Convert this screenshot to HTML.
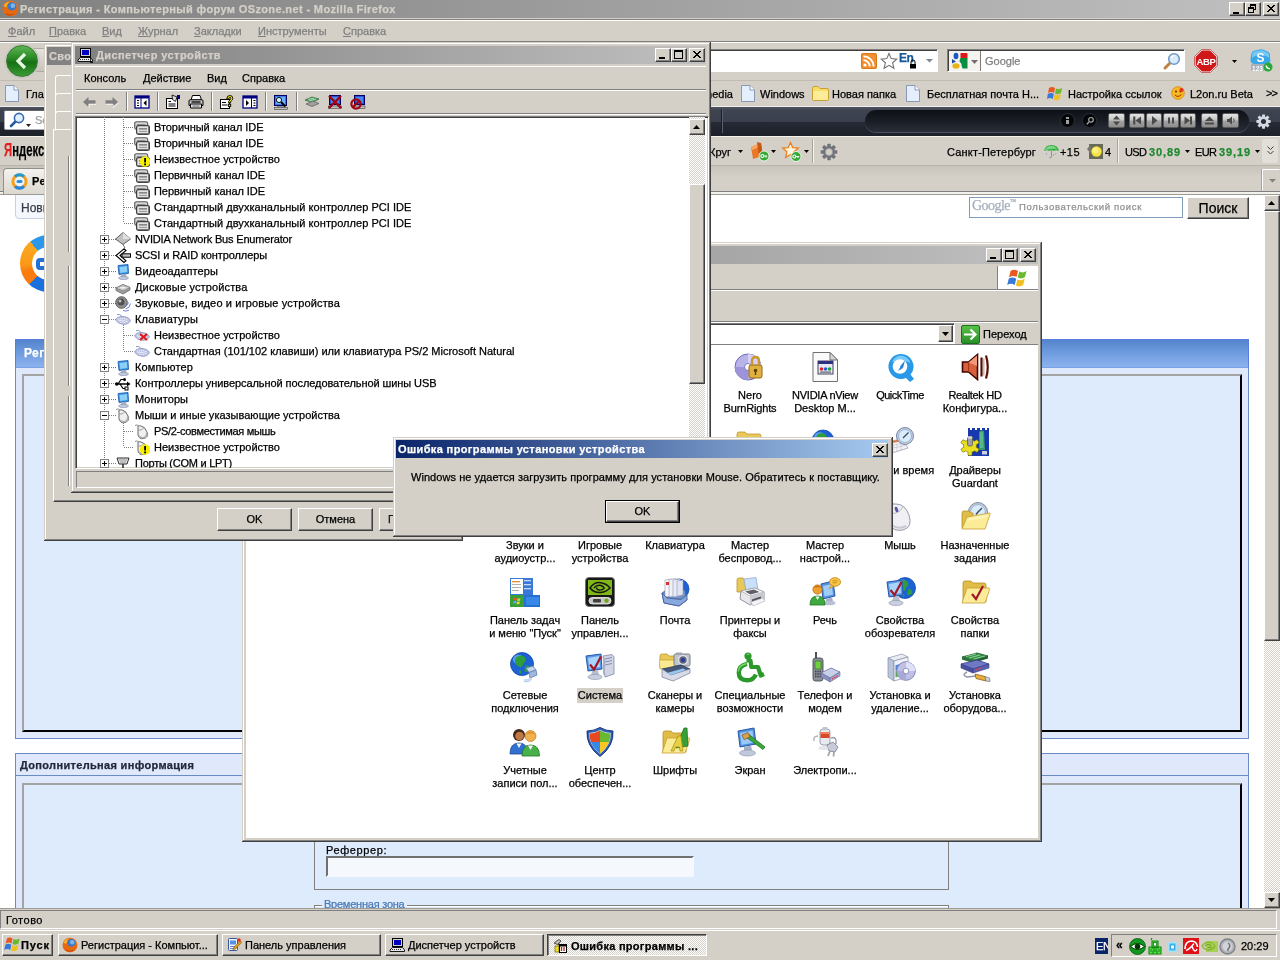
<!DOCTYPE html>
<html><head><meta charset="utf-8">
<style>
*{box-sizing:border-box;margin:0;padding:0}
html,body{-webkit-text-stroke:.25px;width:1280px;height:960px;overflow:hidden;background:#d4d0c8;font-family:"Liberation Sans",sans-serif;font-size:11px;color:#000}
.a{position:absolute}
.t{position:absolute;white-space:nowrap;line-height:14px;font-size:11px}
.b{font-weight:bold}
.face{background:#d4d0c8}
.raised{background:#d4d0c8;border:1px solid;border-color:#fff #404040 #404040 #fff;box-shadow:inset -1px -1px 0 #808080, inset 1px 1px 0 #d4d0c8}
.win{background:#d4d0c8;box-shadow:inset -1px -1px 0 #404040,inset 1px 1px 0 #d4d0c8,inset -2px -2px 0 #808080,inset 2px 2px 0 #fff}
.sunk{border:1px solid;border-color:#808080 #fff #fff #808080;box-shadow:inset 1px 1px 0 #404040, inset -1px -1px 0 #d4d0c8}
.btn{position:absolute;background:#d4d0c8;border:1px solid;border-color:#fff #404040 #404040 #fff;box-shadow:inset -1px -1px 0 #808080;text-align:center;font-size:11px}
.cap{position:absolute;width:16px;height:14px;background:#d4d0c8;border:1px solid;border-color:#fff #404040 #404040 #fff;box-shadow:inset -1px -1px 0 #808080}
.tgray{background:linear-gradient(90deg,#808080,#c0c0c0)}
.tblue{background:linear-gradient(90deg,#0a246a,#a6caf0)}
</style></head><body><div id="root" style="position:absolute;left:0;top:0;width:1280px;height:960px;will-change:transform">


<!-- ================= FIREFOX WINDOW ================= -->
<div id="ff" class="a" style="left:0;top:0;width:1280px;height:931px;background:#d4d0c8">
  <!-- title -->
  <div class="a tgray" style="left:0;top:0;width:1280px;height:18px"></div>
  <svg class="a" style="left:2px;top:0" width="17" height="17" viewBox="0 0 16 16"><circle cx="8" cy="8" r="7.3" fill="#e87018"/><circle cx="9.3" cy="6.3" r="4.3" fill="#3a78c8"/><circle cx="10.2" cy="5.3" r="2.2" fill="#78b8e8"/><path d="M.8 7Q2 1.5 7.5 1Q4.5 3 5.2 6.5Q6 9.5 9.5 9.8Q12.5 9.5 13 7.5L15.2 7Q15.8 12.5 10 15Q3 16 .8 10Z" fill="#e8680e"/><path d="M1.5 5.5Q3.5 2 6.8 1.8Q4 4 4.3 7Z" fill="#f8b828"/><path d="M3 12Q7 15 12.5 12.5Q9 16 4.5 14Z" fill="#c84808"/></svg>
  <div class="t b" style="left:20px;top:2px;color:#d4d0c8;letter-spacing:.37px">Регистрация - Компьютерный форум OSzone.net - Mozilla Firefox</div>
  <div class="cap" style="left:1229px;top:2px"><div class="a" style="left:3px;top:9px;width:6px;height:2px;background:#000"></div></div>
  <div class="cap" style="left:1245px;top:2px"><div class="a" style="left:4px;top:1px;width:6px;height:6px;border:1px solid #000;border-top-width:2px"></div><div class="a" style="left:2px;top:4px;width:6px;height:6px;border:1px solid #000;border-top-width:2px;background:#d4d0c8"></div></div>
  <div class="cap" style="left:1263px;top:2px"><svg class="a" style="left:3px;top:2px" width="8" height="7"><path d="M0 0L7 7M1 0L8 7M7 0L0 7M8 0L1 7" stroke="#000" stroke-width="1" shape-rendering="crispEdges"/></svg></div>
  <div class="a" style="left:0;top:18px;width:1280px;height:1px;background:#d4d0c8"></div>
  <div class="a" style="left:0;top:19px;width:1280px;height:1px;background:#808080"></div>
  <div class="a" style="left:0;top:20px;width:1280px;height:1px;background:#fff"></div>
  <!-- menu -->
  <div id="ffmenu" style="color:#808080">
  <div class="t" style="left:8px;top:24px;color:inherit"><u>Ф</u>айл</div>
  <div class="t" style="left:49px;top:24px;color:inherit"><u>П</u>равка</div>
  <div class="t" style="left:102px;top:24px;color:inherit"><u>В</u>ид</div>
  <div class="t" style="left:138px;top:24px;color:inherit"><u>Ж</u>урнал</div>
  <div class="t" style="left:194px;top:24px;color:inherit"><u>З</u>акладки</div>
  <div class="t" style="left:258px;top:24px;color:inherit"><u>И</u>нструменты</div>
  <div class="t" style="left:343px;top:24px;color:inherit"><u>С</u>правка</div>
  </div>
  <div class="a" style="left:0;top:41px;width:1280px;height:1px;background:#808080"></div>
  <div class="a" style="left:0;top:42px;width:1280px;height:1px;background:#fff"></div>
  <!-- nav toolbar 43-80 -->
  <div class="a" style="left:30px;top:48px;width:40px;height:24px;border-radius:0 12px 12px 0;background:linear-gradient(#e4e2dc,#c8c4bc);border:1px solid #b0aca4"></div><div class="a" style="left:6px;top:45px;width:32px;height:32px;border-radius:50%;background:linear-gradient(#5cb454 0,#2a8a24 40%,#177016 55%,#3a9c34 100%);border:1px solid #3a7a34;box-shadow:0 0 0 1.5px #c8c8c0"></div>
  <svg class="a" style="left:14px;top:52px" width="16" height="18"><path d="M11 2L4 9L11 16" stroke="#e8f8e4" stroke-width="3.2" fill="none"/></svg>
  <!-- url bar -->
  <div class="a" style="left:60px;top:49px;width:878px;height:23px;background:#fff;border:1px solid;border-color:#808080 #fff #fff #808080;box-shadow:inset 1px 1px 0 #404040"></div>
  <svg class="a" style="left:861px;top:53px" width="16" height="16"><rect width="16" height="16" rx="2" fill="#f09030"/><rect x=".5" y=".5" width="15" height="15" rx="2" fill="none" stroke="#d87818"/><circle cx="4" cy="12" r="1.6" fill="#fff"/><path d="M2.5 7.2A6.3 6.3 0 0 1 8.8 13.5M2.5 3.4A10.1 10.1 0 0 1 12.6 13.5" stroke="#fff" stroke-width="1.8" fill="none"/></svg>
  <svg class="a" style="left:880px;top:52px" width="18" height="18"><path d="M9 1.5L11.2 6.6L16.8 7.1L12.6 10.8L13.9 16.3L9 13.4L4.1 16.3L5.4 10.8L1.2 7.1L6.8 6.6Z" fill="#fff" stroke="#707070" stroke-width="1.1"/></svg>
  <div class="t b" style="left:899px;top:51px;color:#185898;font-size:12px;letter-spacing:-.5px">En</div>
  <svg class="a" style="left:909px;top:59px" width="8" height="10"><path d="M2 5V3Q2 1 4 1Q6 1 6 3V5" stroke="#000" fill="none"/><rect x="1" y="5" width="6" height="4.5" fill="#000"/></svg>
  <svg class="a" style="left:926px;top:59px" width="7" height="4"><path d="M0 0H7L3.5 3.5Z" fill="#808890"/></svg>
  <!-- search -->
  <div class="a" style="left:947px;top:49px;width:238px;height:23px;background:#fff;border:1px solid;border-color:#808080 #fff #fff #808080;box-shadow:inset 1px 1px 0 #404040"></div>
  <div class="a" style="left:949px;top:51px;width:32px;height:20px;background:#f4f3f0;border-right:1px solid #807c74"></div>
  <svg class="a" style="left:951px;top:52px" width="18" height="18"><ellipse cx="5" cy="4" rx="2.4" ry="3.3" fill="#1858c0"/><path d="M1 7L5 9.5L1 11.5Z" fill="#1a4aa8"/><ellipse cx="5" cy="14" rx="3.6" ry="2.8" fill="#e8b418"/><path d="M9.5 1H15.5Q16.5 1 16.5 2V6H9.5Z" fill="#e01818"/><path d="M9.5 6H16.5V16.5H11.5L10.5 13.5Q10.8 11.5 8.5 9.5Q8.5 7.5 9.5 6Z" fill="#089040"/></svg>
  <svg class="a" style="left:971px;top:60px" width="7" height="4"><path d="M0 0H7L3.5 4Z" fill="#707070"/></svg>
  <div class="t" style="left:985px;top:54px;color:#808080">Google</div>
  <svg class="a" style="left:1162px;top:52px" width="20" height="19"><path d="M3 16L9 10" stroke="#c08040" stroke-width="3" stroke-linecap="round"/><circle cx="12" cy="7" r="5.3" fill="#d8ecfc" stroke="#7098c8" stroke-width="1.6"/><path d="M9 6Q10 3.5 13 3.5" stroke="#fff" stroke-width="1.2" fill="none"/></svg>
  <!-- ABP -->
  <svg class="a" style="left:1194px;top:49px" width="24" height="24"><path d="M7.5 1H16.5L23 7.5V16.5L16.5 23H7.5L1 16.5V7.5Z" fill="#d01818" stroke="#f8f8f8" stroke-width="1.2"/><path d="M7.5 .5H16.5L23.5 7.5V16.5L16.5 23.5H7.5L.5 16.5V7.5Z" fill="none" stroke="#b01010" stroke-width=".6"/><text x="12" y="16" font-family="Liberation Sans" font-weight="bold" font-size="9.5" fill="#fff" text-anchor="middle" letter-spacing="-.4">ABP</text></svg>
  <svg class="a" style="left:1232px;top:60px" width="5" height="3"><path d="M0 0H5L2.5 3Z" fill="#000"/></svg>
  <svg class="a" style="left:1248px;top:48px" width="26" height="26"><path d="M3 8Q3 2 10 2Q14 0 18 3Q23 4 22 10Q24 16 17 16L6 16Q1 15 3 8Z" fill="#38a8e8"/><path d="M4 8Q4 3 10 3Q14 1 18 4Q22 5 21 10Q18 7 12 7Q7 7 4 10Z" fill="#78c8f4"/><text x="12.5" y="14" font-family="Liberation Sans" font-weight="bold" font-size="12" fill="#fff" text-anchor="middle">S</text><rect x="3" y="16" width="14" height="7" rx="1" fill="#a8b0b8"/><text x="9.5" y="22.5" font-family="Liberation Sans" font-weight="bold" font-size="6.5" fill="#fff" text-anchor="middle">123</text><circle cx="20" cy="19" r="4.5" fill="#28a838"/><path d="M18 17.5Q19 21 22 20.5" stroke="#fff" stroke-width="1.3" fill="none"/></svg>
  <div class="a" style="left:0;top:80px;width:1280px;height:1px;background:#c0bcb0"></div>
  <!-- bookmarks 81-106 -->
  <svg class="a" style="left:5px;top:85px" width="14" height="17"><path d="M.5 .5H9L13.5 5V16.5H.5Z" fill="#e4eefc" stroke="#8898b8"/><path d="M9 .5V5H13.5" fill="#fff" stroke="#8898b8"/></svg>
  <div class="t" style="left:26px;top:87px">Главная</div>
  <div class="t" style="left:703px;top:87px">media</div>
  <svg class="a pgico" style="left:741px;top:85px" width="14" height="17"><path d="M.5 .5H9L13.5 5V16.5H.5Z" fill="#e4eefc" stroke="#8898b8"/><path d="M9 .5V5H13.5" fill="#fff" stroke="#8898b8"/></svg>
  <div class="t" style="left:760px;top:87px">Windows</div>
  <svg class="a" style="left:812px;top:86px" width="17" height="15"><path d="M.5 2.5Q.5 .5 2 .5H6L8 2.5H15Q16.5 2.5 16.5 4V13Q16.5 14.5 15 14.5H2Q.5 14.5 .5 13Z" fill="#f8dc68" stroke="#c8a030"/><path d="M1 5H16V13.5Q16 14 15 14H2Q1 14 1 13Z" fill="#fcec98"/></svg>
  <div class="t" style="left:832px;top:87px">Новая папка</div>
  <svg class="a" style="left:906px;top:85px" width="14" height="17"><path d="M.5 .5H9L13.5 5V16.5H.5Z" fill="#e4eefc" stroke="#8898b8"/><path d="M9 .5V5H13.5" fill="#fff" stroke="#8898b8"/></svg>
  <div class="t" style="left:927px;top:87px">Бесплатная почта Н...</div>
  <svg class="a" style="left:1047px;top:85px" width="17" height="16"><path d="M2 3Q5 1 8 3L7 8Q4 6 1 8Z" fill="#e85820"/><path d="M9 3.5Q12 5 15 3L14 8Q11 10 8 8.5Z" fill="#68b830"/><path d="M.8 9Q4 7 6.8 9L5.8 14Q3 12 0 14Z" fill="#3878d8"/><path d="M7.8 9.5Q11 11 13.8 9L12.8 14Q10 16 6.8 14.5Z" fill="#f0c020"/></svg>
  <div class="t" style="left:1068px;top:87px">Настройка ссылок</div>
  <svg class="a" style="left:1171px;top:86px" width="14" height="14"><circle cx="7" cy="7" r="6.3" fill="#f8b820" stroke="#d88810" stroke-width=".8"/><circle cx="5" cy="5.5" r="1" fill="#603000"/><circle cx="9.5" cy="5.5" r="1" fill="#603000"/><path d="M4 9Q7 12 10.5 8.5" stroke="#a03000" fill="none"/><circle cx="10.5" cy="4" r="2" fill="#e03020"/></svg>
  <div class="t" style="left:1190px;top:87px">L2on.ru Beta</div>
  <div class="t" style="left:1266px;top:86px;font-size:11px;letter-spacing:-1px">&gt;&gt;</div>
  <!-- media bar 107-135 -->
  <div class="a" style="left:0;top:106px;width:1280px;height:1px;background:#f0f0f0"></div>
  <div class="a" style="left:0;top:107px;width:1280px;height:29px;background:linear-gradient(#50545e 0,#3e4350 12%,#3a404e 50%,#262a36 52%,#1c2028 100%)"></div>
  <div class="a" style="left:4px;top:110px;width:60px;height:20px;background:#fff;border:1px solid #aab;border-top-color:#666;border-radius:2px"></div>
  <svg class="a" style="left:8px;top:111px" width="24" height="18"><path d="M3 15L8 10" stroke="#2858a0" stroke-width="2.6" stroke-linecap="round"/><circle cx="11" cy="7" r="4.6" fill="#e0f0ff" stroke="#3868b0" stroke-width="1.6"/><path d="M18 13H23L20.5 16Z" fill="#202020"/></svg>
  <div class="t" style="left:35px;top:113px;color:#a0a0a0">Se</div>
  <div class="a" style="left:721px;top:109px;width:1px;height:24px;background:#1a1c24"></div>
  <div class="a" style="left:722px;top:109px;width:1px;height:24px;background:#5a6070"></div>
  <div class="a" style="left:865px;top:110px;width:384px;height:22px;border-radius:11px;background:linear-gradient(#0e1016,#1c2028 60%,#2a2e3a);box-shadow:0 1px 0 #4a5060"></div>
  <div class="a" style="left:1060px;top:113px;width:15px;height:15px;border-radius:50%;background:#05060a;border:1px solid #2c303a"></div>
  <div class="a" style="left:1066px;top:117px;width:3px;height:2px;background:#a0a0a0"></div><div class="a" style="left:1066px;top:120px;width:3px;height:4px;background:#a0a0a0"></div>
  <div class="a" style="left:1082px;top:113px;width:15px;height:15px;border-radius:50%;background:#05060a;border:1px solid #2c303a"></div>
  <svg class="a" style="left:1084px;top:115px" width="12" height="12"><circle cx="7" cy="4.8" r="2.3" stroke="#a8a8a8" stroke-width="1.2" fill="none"/><path d="M5.2 6.6L2.8 9.4" stroke="#a8a8a8" stroke-width="1.4"/></svg>
  <div class="a" style="left:1108px;top:113px;width:17px;height:15px;border-radius:2px;background:linear-gradient(#e4e4e4,#c4c4c4 46%,#a2a2a2 54%,#8e8e8e);border:1px solid #5a5a5a"></div><svg class="a" style="left:1108px;top:113px" width="17" height="15"><path d="M8.5 2.5L12 6.5H5Z M8.5 12.5L12 8.5H5Z" fill="#4a4a4a"/></svg>
  <div class="a" style="left:1129px;top:113px;width:16px;height:15px;border-radius:2px;background:linear-gradient(#e4e4e4,#c4c4c4 46%,#a2a2a2 54%,#8e8e8e);border:1px solid #5a5a5a"></div><svg class="a" style="left:1129px;top:113px" width="16" height="15"><path d="M5 3.5V11.5M5.5 3.5V11.5" stroke="#4a4a4a" stroke-width="1.6"/><path d="M12 3.5V11.5L6.5 7.5Z" fill="#4a4a4a"/></svg>
  <div class="a" style="left:1146px;top:113px;width:16px;height:15px;border-radius:2px;background:linear-gradient(#e4e4e4,#c4c4c4 46%,#a2a2a2 54%,#8e8e8e);border:1px solid #5a5a5a"></div><svg class="a" style="left:1146px;top:113px" width="16" height="15"><path d="M6 3V12L11.5 7.5Z" fill="#4a4a4a"/></svg>
  <div class="a" style="left:1163px;top:113px;width:16px;height:15px;border-radius:2px;background:linear-gradient(#e4e4e4,#c4c4c4 46%,#a2a2a2 54%,#8e8e8e);border:1px solid #5a5a5a"></div><svg class="a" style="left:1163px;top:113px" width="16" height="15"><path d="M6 4.5V10.5M10 4.5V10.5" stroke="#4a4a4a" stroke-width="2"/></svg>
  <div class="a" style="left:1180px;top:113px;width:16px;height:15px;border-radius:2px;background:linear-gradient(#e4e4e4,#c4c4c4 46%,#a2a2a2 54%,#8e8e8e);border:1px solid #5a5a5a"></div><svg class="a" style="left:1180px;top:113px" width="16" height="15"><path d="M11 3.5V11.5" stroke="#4a4a4a" stroke-width="2"/><path d="M4.5 3.5V11.5L10 7.5Z" fill="#4a4a4a"/></svg>
  <div class="a" style="left:1201px;top:113px;width:17px;height:15px;border-radius:2px;background:linear-gradient(#e4e4e4,#c4c4c4 46%,#a2a2a2 54%,#8e8e8e);border:1px solid #5a5a5a"></div><svg class="a" style="left:1201px;top:113px" width="17" height="15"><path d="M8.5 3.5L13 8H4Z" fill="#4a4a4a"/><rect x="4" y="9.5" width="9" height="2" fill="#4a4a4a"/></svg>
  <div class="a" style="left:1222px;top:113px;width:17px;height:15px;border-radius:2px;background:linear-gradient(#e4e4e4,#c4c4c4 46%,#a2a2a2 54%,#8e8e8e);border:1px solid #5a5a5a"></div><svg class="a" style="left:1222px;top:113px" width="17" height="15"><path d="M5 6H7L10 3.5V11.5L7 9H5Z" fill="#4a4a4a"/><path d="M11.5 5.5Q13 7.5 11.5 9.5" stroke="#4a4a4a" fill="none"/></svg>
  <svg class="a" style="left:1256px;top:114px" width="15" height="15" viewBox="-8 -8 16 16"><g fill="#d4d8e0"><circle r="5.6"/><rect x="-1.6" y="-7.6" width="3.2" height="15.2" rx=".5" transform="rotate(0)"/><rect x="-1.6" y="-7.6" width="3.2" height="15.2" rx=".5" transform="rotate(45)"/><rect x="-1.6" y="-7.6" width="3.2" height="15.2" rx=".5" transform="rotate(90)"/><rect x="-1.6" y="-7.6" width="3.2" height="15.2" rx=".5" transform="rotate(135)"/></g><circle r="2.7" fill="#2a2e3a"/></svg>
  <!-- yandex bar 136-165 -->
  <div class="a" style="left:0;top:136px;width:1280px;height:30px;background:#d4d0c8;border-top:1px solid #f4f3ee"></div>
  <div class="t b" style="left:4px;top:140px;font-size:19px;line-height:20px;transform:scaleX(.595);transform-origin:0 0"><span style="color:#e02020">Я</span>ндекс</div>
  <div class="t" style="left:709px;top:145px">Круг</div>
  <svg class="a" style="left:738px;top:150px" width="5" height="3"><path d="M0 0H5L2.5 3Z" fill="#000"/></svg>
  <svg class="a" style="left:749px;top:141px" width="22" height="22"><path d="M2 6L12 2L14 15L4 18Z" fill="#e87828"/><path d="M2 6L12 2L12.5 5L3 9Z" fill="#f8a860"/><path d="M8 1L12 2L14 15L10 16Z" fill="#c85810"/><circle cx="15" cy="15" r="5" fill="#38a838" stroke="#fff" stroke-width=".8"/><circle cx="13.3" cy="15" r="1.5" fill="none" stroke="#fff" stroke-width="1.1"/><path d="M14.8 15H18.2M17 15V16.6" stroke="#fff" stroke-width="1.1"/></svg>
  <svg class="a" style="left:771px;top:150px" width="5" height="3"><path d="M0 0H5L2.5 3Z" fill="#000"/></svg>
  <svg class="a" style="left:781px;top:141px" width="22" height="22"><path d="M9.5 1.5L11.7 6.6L17.3 7.1L13.1 10.8L14.4 16.3L9.5 13.4L4.6 16.3L5.9 10.8L1.7 7.1L7.3 6.6Z" fill="#fff4e0" stroke="#e88020" stroke-width="1.3"/><circle cx="15" cy="15.5" r="5" fill="#38a838" stroke="#fff" stroke-width=".8"/><circle cx="13.3" cy="15.5" r="1.5" fill="none" stroke="#fff" stroke-width="1.1"/><path d="M14.8 15.5H18.2M17 15.5V17.1" stroke="#fff" stroke-width="1.1"/></svg>
  <svg class="a" style="left:804px;top:150px" width="5" height="3"><path d="M0 0H5L2.5 3Z" fill="#000"/></svg>
  <div class="a" style="left:812px;top:139px;width:1px;height:24px;background:#a8a498"></div><div class="a" style="left:813px;top:139px;width:1px;height:24px;background:#f4f2ec"></div>
  <svg class="a" style="left:820px;top:143px" width="18" height="18" viewBox="-9 -9 18 18"><g fill="#707478"><circle r="6"/><g><rect x="-1.7" y="-8.3" width="3.4" height="16.6" rx=".6"/></g><g transform="rotate(45)"><rect x="-1.7" y="-8.3" width="3.4" height="16.6" rx=".6"/></g><g transform="rotate(90)"><rect x="-1.7" y="-8.3" width="3.4" height="16.6" rx=".6"/></g><g transform="rotate(135)"><rect x="-1.7" y="-8.3" width="3.4" height="16.6" rx=".6"/></g></g><circle r="3.6" fill="#d4d0c8"/><circle r="3.6" fill="none" stroke="#9a9ea0" stroke-width=".8"/></svg>
  <div class="t" style="left:947px;top:145px;letter-spacing:.18px">Санкт-Петербург</div>
  <svg class="a" style="left:1043px;top:143px" width="17" height="17"><path d="M1 8Q2 2 8.5 2Q15 2 16 8Q13 6.5 11 8Q8.5 6.5 6 8Q3.5 6.5 1 8Z" fill="#38b048"/><path d="M2 7Q4 3 8.5 3Q12 3 14 6Q10 4.5 2 7Z" fill="#80d888"/><path d="M8.5 7.5V13Q8.5 15 6.5 14.5" stroke="#8898a8" fill="none" stroke-width="1.1"/><path d="M4 10L3 12M11 11L10 13M13 10L12.5 11.5" stroke="#88a8c8" stroke-width=".9"/></svg>
  <div class="t" style="left:1060px;top:145px;letter-spacing:0.443px">+15</div>
  <svg class="a" style="left:1087px;top:143px" width="17" height="17"><rect x="2" y="1" width="14" height="15" fill="#686858"/><path d="M0 6L4 1V11Z" fill="#787868"/><circle cx="9.5" cy="8.5" r="5.2" fill="#f8e040"/><circle cx="8.5" cy="7.5" r="3" fill="#fcf080"/></svg>
  <div class="t" style="left:1105px;top:145px">4</div>
  <div class="a" style="left:1117px;top:139px;width:1px;height:24px;background:#a8a498"></div><div class="a" style="left:1118px;top:139px;width:1px;height:24px;background:#f4f2ec"></div>
  <div class="t" style="left:1125px;top:145px;letter-spacing:-0.578px">USD</div>
  <div class="t b" style="left:1149px;top:145px;color:#1e8a30;letter-spacing:0.894px">30,89</div>
  <svg class="a" style="left:1185px;top:150px" width="5" height="3"><path d="M0 0H5L2.5 3Z" fill="#000"/></svg>
  <div class="t" style="left:1195px;top:145px;letter-spacing:-0.578px">EUR</div>
  <div class="t b" style="left:1219px;top:145px;color:#1e8a30;letter-spacing:0.894px">39,19</div>
  <svg class="a" style="left:1255px;top:150px" width="5" height="3"><path d="M0 0H5L2.5 3Z" fill="#000"/></svg>
  <div class="a" style="left:1262px;top:139px;width:16px;height:24px;background:#e2dfd8;border-radius:2px"></div><svg class="a" style="left:1267px;top:146px" width="7" height="10"><path d="M.5 .5L3.5 3.5L6.5 .5M.5 5L3.5 8L6.5 5" stroke="#404040" fill="none"/></svg>
  <!-- tab bar 166-193 -->
  <div class="a" style="left:0;top:165px;width:1280px;height:1px;background:#b8b4a8"></div>
  <div class="a" style="left:0;top:166px;width:1280px;height:27px;background:linear-gradient(#c8c4bc,#d4d0c8 40%)"></div>
  <div class="a" style="left:0;top:191px;width:1280px;height:1px;background:#808080"></div>
  <div class="a" style="left:0;top:192px;width:1280px;height:2px;background:#f2f1ec"></div>
  <div class="a" style="left:3px;top:168px;width:180px;height:26px;background:linear-gradient(#f4f2ee,#dcd8d0);border:1px solid #909088;border-bottom:none;border-radius:4px 4px 0 0"></div>
  <svg class="a" style="left:11px;top:173px" width="17" height="17"><circle cx="8.5" cy="8.5" r="6.6" fill="none" stroke="#f8a020" stroke-width="3"/><path d="M4 3.6A6.6 6.6 0 0 1 13 3.6" fill="none" stroke="#2098d0" stroke-width="3"/><path d="M4 13.4A6.6 6.6 0 0 0 13 13.4" fill="none" stroke="#2088e0" stroke-width="3"/><circle cx="8.5" cy="8.5" r="4.6" fill="#e8f4fc"/><rect x="5.5" y="7" width="6" height="3" rx="1.5" fill="#3090e0"/></svg>
  <div class="t b" style="left:32px;top:174px;letter-spacing:.4px">Регистрация</div>
  <div class="a" style="left:1262px;top:169px;width:18px;height:22px;background:#d4d0c8;border:1px solid;border-color:#fff #d4d0c8 #d4d0c8 #fff;box-shadow:-1px 0 0 #a8a498"></div>
  <svg class="a" style="left:1269px;top:179px" width="7" height="4"><path d="M0 0H7L3.5 3.5Z" fill="#808080"/></svg>
  <!-- page 194-908 -->
  <div id="page" class="a" style="left:0;top:194px;width:1264px;height:714px;background:#fff;overflow:hidden">
    <div class="a" style="left:15px;top:-3px;width:400px;height:28px;background:#f4f7fc;border:1px solid #c4d0e4;border-radius:4px"></div>
    <div class="t" style="left:21px;top:7px;font-size:12px;color:#383c48">Новые</div>
    <div class="a" style="left:969px;top:3px;width:214px;height:21px;background:#fff;border:1px solid #7f9db9"></div>
    <div class="t" style="left:972px;top:4px;font-family:'Liberation Serif',serif;font-size:14px;line-height:16px;color:#a4b0bc;letter-spacing:-0.536px">Google</div><div class="t" style="left:1010px;top:4px;font-size:4px;line-height:6px;color:#a4b0bc">TM</div>
    <div class="t" style="left:1019px;top:6px;font-size:9.5px;color:#909090;letter-spacing:0.661px">Пользовательский поиск</div>
    <div class="btn" style="left:1187px;top:3px;width:62px;height:22px;font-size:14px;line-height:20px">Поиск</div>
    <!-- logo -->
    <div class="a" style="left:20px;top:41px;width:57px;height:57px;border-radius:50%;background:conic-gradient(#38a0f0 0 70deg,#1c6cd0 70deg 180deg,#1a70dc 180deg 222deg,#f87c10 222deg 250deg,#fc9a18 270deg,#f8a820 320deg,#2c98ec 320deg)"></div>
    <div class="a" style="left:32px;top:53px;width:33px;height:33px;border-radius:50%;background:#fff"></div>
    <div class="a" style="left:36px;top:64px;width:26px;height:12px;border-radius:4px;border:4px solid #2272d4"></div>
    <!-- header bar -->
    <div class="a" style="left:15px;top:145px;width:1234px;height:29px;background:linear-gradient(#5484cc,#6a98dc 40%,#8cb2ee);border:1px solid #5a7ee0;border-bottom-color:#7aa0e8"></div>
    <div class="t b" style="left:24px;top:152px;color:#fff;font-size:12px;letter-spacing:.4px">Регистрация</div>
    <!-- panel 1 -->
    <div class="a" style="left:15px;top:174px;width:1234px;height:371px;background:#dfe9fb;border:1px solid #6a8cc4;border-top:none"></div>
    <div class="a" style="left:22px;top:180px;width:1220px;height:358px;background:#deebfc;border:2px solid;border-color:#a4a4a4 #000 #000 #a4a4a4"></div>
    <!-- panel 2 -->
    <div class="a" style="left:15px;top:559px;width:1234px;height:200px;background:#dfe9fb;border:1px solid #6a8cc4"></div>
    <div class="a" style="left:16px;top:581px;width:1232px;height:1px;background:#6a8cc4"></div>
    <div class="t b" style="left:20px;top:564px;color:#22283a;letter-spacing:.33px">Дополнительная информация</div>
    <div class="a" style="left:22px;top:589px;width:1220px;height:200px;background:#deebfc;border:2px solid;border-color:#a4a4a4 #000 #000 #a4a4a4"></div>
    <div class="a" style="left:314px;top:600px;width:635px;height:96px;border:1px solid #808080;border-top:none"></div>
    <div class="t" style="left:326px;top:649px;letter-spacing:.6px">Реферрер:</div>
    <div class="a" style="left:326px;top:662px;width:368px;height:21px;background:#f5f8fd;border:2px solid;border-color:#707070 #f5f8fd #f5f8fd #707070"></div>
    <div class="a" style="left:314px;top:711px;width:635px;height:10px;border:1px solid #808080;border-bottom:none;box-shadow:inset 0 1px 0 #fff"></div>
    <div class="t" style="left:322px;top:703px;background:#deebfc;padding:0 2px;color:#4a7ab8;letter-spacing:-0.233px">Временная зона</div>
  </div>
  <!-- scrollbar -->
  <div class="a" style="left:1264px;top:194px;width:16px;height:714px;background:#eceae6;background-image:repeating-conic-gradient(#d4d0c8 0 25%,#fff 0 50%);background-size:2px 2px"></div>
  <div class="a" style="left:0;top:194px;width:1280px;height:1px;background:#9c9a94"></div>
  <div class="btn" style="left:1264px;top:195px;width:16px;height:16px"><svg class="a" style="left:3px;top:5px" width="7" height="4"><path d="M3.5 0L7 4H0Z" fill="#000"/></svg></div>
  <div class="btn" style="left:1264px;top:211px;width:16px;height:430px"></div>
  <div class="btn" style="left:1264px;top:892px;width:16px;height:16px"><svg class="a" style="left:3px;top:5px" width="7" height="4"><path d="M0 0H7L3.5 4Z" fill="#000"/></svg></div>
  <!-- status bar -->
  <div class="a" style="left:0;top:908px;width:1280px;height:23px;background:#d4d0c8;border-top:1px solid #a09c94"></div>
  <div class="a" style="left:0;top:910px;width:1277px;height:19px;border:1px solid;border-color:#808080 #fff #fff #808080"></div>
  <div class="a" style="left:0;top:911px;width:1277px;height:19px;border:1px solid;border-color:#808080 #fff #fff #808080;opacity:.0"></div>
  <div class="t" style="left:6px;top:913px;letter-spacing:0.505px">Готово</div>
</div>


<!-- ===== CONTROL PANEL ===== -->
<div id="cp" class="a win" style="left:242px;top:242px;width:800px;height:600px"><div class="a" style="left:2px;top:1px">
<div class="a tgray" style="left:2px;top:3px;width:792px;height:18px"></div>
<div class="t b" style="left:24px;top:5px;color:#d4d0c8;letter-spacing:.37px">Панель управления</div>
<div class="cap" style="left:742px;top:5px"><div class="a" style="left:3px;top:8px;width:6px;height:2px;background:#000"></div></div><div class="cap" style="left:758px;top:5px"><div class="a" style="left:2px;top:1px;width:9px;height:9px;border:1px solid #000;border-top-width:2px"></div></div><div class="cap" style="left:776px;top:5px"><svg class="a" style="left:3px;top:2px" width="8" height="7"><path d="M0 0L7 7M1 0L8 7M7 0L0 7M8 0L1 7" stroke="#000" stroke-width="1" shape-rendering="crispEdges"/></svg></div>
<div class="a" style="left:2px;top:46px;width:751px;height:1px;background:#808080"></div>
<div class="a" style="left:2px;top:47px;width:792px;height:1px;background:#fff"></div>
<div class="a" style="left:753px;top:23px;width:41px;height:24px;background:#fff;border-left:1px solid #808080;border-bottom:1px solid #808080"></div>
<svg class="a" style="left:763px;top:25px" width="22" height="20"><path d="M3.5 3Q7 .5 11 3L9.5 9Q6 7 2 9.5Z" fill="#e85820"/><path d="M12.2 3.6Q16 5.5 19.5 3L18 9Q14.5 11.5 10.7 9.6Z" fill="#68b830"/><path d="M1.7 10.8Q5.5 8.3 9.2 10.8L7.7 17Q4 14.5 .2 17Z" fill="#3878d8"/><path d="M10.4 11.4Q14 13.3 17.7 10.8L16.2 17Q12.5 19.5 8.9 17.6Z" fill="#f0c020"/></svg>
<div class="a" style="left:2px;top:78px;width:792px;height:1px;background:#808080"></div>
<div class="a" style="left:2px;top:79px;width:792px;height:1px;background:#fff"></div>
<div class="a" style="left:60px;top:80px;width:651px;height:21px;background:#fff;border:1px solid;border-color:#808080 #fff #fff #808080;box-shadow:inset 1px 1px 0 #404040"></div>
<div class="btn" style="left:694px;top:82px;width:15px;height:17px"><svg class="a" style="left:3px;top:6px" width="7" height="4"><path d="M0 0H7L3.5 4Z" fill="#000"/></svg></div>
<div class="a" style="left:717px;top:82px;width:19px;height:19px;border-radius:2px;background:linear-gradient(#58c048,#289028);border:1px solid #187018"></div>
<svg class="a" style="left:719px;top:85px" width="15" height="13"><path d="M1 6.5H12M7.5 1.5L12.5 6.5L7.5 11.5" stroke="#fff" stroke-width="2.2" fill="none"/></svg>
<div class="t" style="left:739px;top:84px">Переход</div>
<div class="a" style="left:2px;top:101px;width:792px;height:1px;background:#808080"></div>
<div class="a" style="left:2px;top:102px;width:792px;height:493px;background:#fff"></div>
<svg class="a" style="left:490px;top:108px" width="32" height="32" viewBox="0 0 32 32"><circle cx="14" cy="16" r="13" fill="#b8b4e8"/><circle cx="14" cy="16" r="13" fill="none" stroke="#7068b8" stroke-width="1"/><path d="M14 3A13 13 0 0 1 27 16L14 16Z" fill="#d8d0f8"/><path d="M1 16A13 13 0 0 0 14 29L14 16Z" fill="#9c94d8"/><circle cx="14" cy="16" r="3.5" fill="#fff" stroke="#8078c0"/><rect x="15" y="14" width="13" height="13" rx="2" fill="#e0b040" stroke="#986810" stroke-width="1"/><path d="M18 14V10Q18 6 21.5 6Q25 6 25 10V14" stroke="#c89828" stroke-width="2.4" fill="none"/><circle cx="21.5" cy="19.5" r="1.8" fill="#604000"/><rect x="20.8" y="20" width="1.4" height="4" fill="#604000"/></svg>
<div class="a" style="left:461px;top:146px;width:90px;text-align:center;line-height:13px;font-size:11px">Nero<br><span style="letter-spacing:-.15px">BurnRights</span></div>
<svg class="a" style="left:565px;top:108px" width="32" height="32" viewBox="0 0 32 32"><path d="M4 1.5H21L28.5 9V30.5H4Z" fill="#fafafa" stroke="#707070" stroke-width="1"/><path d="M21 1.5V9H28.5Z" fill="#d8d8d8" stroke="#707070" stroke-width="1"/><rect x="9" y="10" width="15" height="13" fill="#e8e8f4" stroke="#404060" stroke-width="1"/><rect x="9" y="10" width="15" height="3" fill="#303080"/><circle cx="12.5" cy="18" r="1.8" fill="#e02020"/><circle cx="16.5" cy="18" r="1.8" fill="#2060e0"/><circle cx="20.5" cy="18" r="1.8" fill="#20a030"/><rect x="11" y="20.5" width="11" height="1.2" fill="#606060"/></svg>
<div class="a" style="left:536px;top:146px;width:90px;text-align:center;line-height:13px;font-size:11px"><span style="letter-spacing:-.25px">NVIDIA nView</span><br>Desktop M...</div>
<svg class="a" style="left:640px;top:108px" width="32" height="32" viewBox="0 0 32 32"><path d="M16 3A12.5 12.5 0 1 0 22 26.9L26 31L30 28L26.5 23.5A12.5 12.5 0 0 0 16 3Z" fill="#2898e8"/><path d="M16 4.5A11 11 0 0 1 26.5 12Q20 8 8 11A11 11 0 0 1 16 4.5Z" fill="#78c8f8"/><circle cx="16" cy="15.5" r="7.3" fill="#fff"/><path d="M16 15.5L21 9.5L19 17Z" fill="#2080d8"/><path d="M14 20L17 15L19 17Z" fill="#2080d8"/></svg>
<div class="a" style="left:611px;top:146px;width:90px;text-align:center;line-height:13px;font-size:11px"><span style="letter-spacing:-.5px">QuickTime</span></div>
<svg class="a" style="left:715px;top:108px" width="32" height="32" viewBox="0 0 32 32"><path d="M3.5 11H9.5L18.5 3.5V28.5L9.5 21H3.5Z" fill="#d8603c" stroke="#400800" stroke-width="1.6"/><path d="M9.5 11.5L18 4.5V15Z" fill="#f09878"/><path d="M9.5 11V21" stroke="#a03818" stroke-width="1"/><path d="M22.5 6.5V25.5" stroke="#501008" stroke-width="2.2"/><path d="M27 4.5Q30.5 16 27 27.5" stroke="#501008" stroke-width="2.2" fill="none"/><path d="M24.8 7.5V24.5" stroke="#e0a890" stroke-width="1.4"/></svg>
<div class="a" style="left:686px;top:146px;width:90px;text-align:center;line-height:13px;font-size:11px"><span style="letter-spacing:-.3px">Realtek HD</span><br>Конфигура...</div>
<svg class="a" style="left:490px;top:183px" width="32" height="32" viewBox="0 0 32 32"><path d="M3 8Q3 6 5 6H11L13 8H25Q27 8 27 10V25H3Z" fill="#e8c858" stroke="#c09828" stroke-width=".8"/><path d="M1 13H24Q26 13 25.6 15L24 27H3Z" fill="#fce890" stroke="#c8a030" stroke-width=".8"/></svg>
<svg class="a" style="left:565px;top:183px" width="32" height="32" viewBox="0 0 32 32"><circle cx="14" cy="15" r="11" fill="#1c62d4" stroke="#1448a8" stroke-width=".8"/><ellipse cx="10.7" cy="10.6" rx="5.5" ry="4.4" fill="#6ab0f8" opacity=".75"/><path d="M7.949999999999999 8.95q4.95 -3.8499999999999996 8.8 -0.55q2.2 4.4 -1.65 6.050000000000001q-1.1 5.5 -4.4 2.75q-4.95 -1.65 -2.75 -8.25z" fill="#2e9e3a"/><path d="M17.3 16.65q4.4 -1.1 4.4 3.3q-1.65 3.8499999999999996 -5.5 1.65z" fill="#2e9e3a"/><path d="M11.8 20.5q2.2 1.1 1.1 3.8499999999999996q-2.75 -0.55 -1.1 -3.8499999999999996z" fill="#2e9e3a"/><rect x="20" y="12" width="10" height="8" fill="#e8a848"/></svg>
<svg class="a" style="left:640px;top:183px" width="32" height="32" viewBox="0 0 32 32"><path d="M2 16L18 13L24 22L8 27Z" fill="#f4f4f8" stroke="#a0a0b0" stroke-width=".8"/><path d="M2 16L18 13L19 15L3.5 18Z" fill="#e87840"/><path d="M5 20L20 17M6.5 22.5L21.5 19.5M9 18V26M13 17.5V25M17 16.5V24" stroke="#c0c0d0" stroke-width=".7"/><circle cx="21" cy="10" r="8.5" fill="#c8d0e0" stroke="#7888a8" stroke-width="1"/><circle cx="21" cy="10" r="6.5" fill="#d8ecfc" stroke="#90a8c8" stroke-width=".8"/><path d="M21 10L24.5 6.5M21 10L19 12" stroke="#404858" stroke-width="1.3"/></svg>
<div class="a" style="left:611px;top:221px;width:90px;text-align:center;line-height:13px;font-size:11px"><span style="visibility:hidden">Дата </span>и время</div>
<svg class="a" style="left:715px;top:183px" width="32" height="32" viewBox="0 0 32 32"><path d="M9 2H11V4H13V2H16V4H18V2H21V4H23V2H26V4H28V2H30V30H9Z" fill="#1838b0"/><path d="M20 6Q22 3 25 5L26 24H20Z" fill="#389868"/><path d="M21 7Q22.5 5 24 6.5L24.5 22H21Z" fill="#58b888"/><rect x="23" y="25" width="5" height="3.5" fill="#d0d0e0"/><g transform="translate(11 20)"><g fill="#e8e020" stroke="#707000" stroke-width=".6"><circle r="6.5"/><g><rect x="-2" y="-9.5" width="4" height="19" rx="1"/></g><g transform="rotate(60)"><rect x="-2" y="-9.5" width="4" height="19" rx="1"/></g><g transform="rotate(120)"><rect x="-2" y="-9.5" width="4" height="19" rx="1"/></g></g><circle r="6" fill="#e8e020"/></g><rect x="8.5" y="11" width="5" height="9" rx="1.5" fill="#a0a0a8" stroke="#505058" stroke-width=".7"/><ellipse cx="11" cy="11.5" rx="2.5" ry="1.2" fill="#d8d8e0"/></svg>
<div class="a" style="left:686px;top:221px;width:90px;text-align:center;line-height:13px;font-size:11px">Драйверы<br>Guardant</div>
<div class="a" style="left:236px;top:296px;width:90px;text-align:center;line-height:13px;font-size:11px">Звуки и<br>аудиоустр...</div>
<div class="a" style="left:311px;top:296px;width:90px;text-align:center;line-height:13px;font-size:11px">Игровые<br>устройства</div>
<div class="a" style="left:386px;top:296px;width:90px;text-align:center;line-height:13px;font-size:11px">Клавиатура</div>
<div class="a" style="left:461px;top:296px;width:90px;text-align:center;line-height:13px;font-size:11px">Мастер<br>беспровод...</div>
<div class="a" style="left:536px;top:296px;width:90px;text-align:center;line-height:13px;font-size:11px">Мастер<br>настрой...</div>
<svg class="a" style="left:640px;top:258px" width="32" height="32" viewBox="0 0 32 32"><path d="M6 10Q4 2 12 3Q21 3 25 14Q29 26 19 29Q8 31 6 22Z" fill="#f0f0f4" stroke="#9898a8" stroke-width="1"/><path d="M6.5 12Q14 14 19 6" stroke="#b0b0c0" fill="none" stroke-width=".9"/><ellipse cx="12.5" cy="8.5" rx="1.6" ry="2.8" fill="#5858a8" transform="rotate(-20 12.5 8.5)"/><path d="M8 24Q14 29 22 25" stroke="#c8c8d4" stroke-width="2" fill="none"/><path d="M10 3Q6 0 2 3" stroke="#b0b0c0" fill="none"/></svg>
<div class="a" style="left:611px;top:296px;width:90px;text-align:center;line-height:13px;font-size:11px">Мышь</div>
<svg class="a" style="left:715px;top:258px" width="32" height="32" viewBox="0 0 32 32"><circle cx="19" cy="11" r="9.5" fill="#c0c8d8" stroke="#8090a8" stroke-width="1"/><circle cx="19" cy="11" r="7.3" fill="#d8ecfc" stroke="#98b0c8" stroke-width=".8"/><path d="M19 11L23 7M19 11L17 13.5" stroke="#404858" stroke-width="1.4"/><path d="M3 12Q3 10 5 10H10L12 12H14V27H3Z" fill="#e0bc48" stroke="#b89020" stroke-width=".8"/><path d="M8 16L31 12Q31.5 12 31 13.5L26 28H3Z" fill="#fcec98" stroke="#c8a030" stroke-width=".8"/><path d="M10 17L29 13.8L28 16L9 20Z" fill="#fff8c8" opacity=".7"/></svg>
<div class="a" style="left:686px;top:296px;width:90px;text-align:center;line-height:13px;font-size:11px">Назначенные<br>задания</div>
<svg class="a" style="left:265px;top:333px" width="32" height="32" viewBox="0 0 32 32"><rect x="1" y="2" width="23" height="17" fill="#3878d8"/><rect x="2" y="3" width="12" height="15" fill="#fff"/><rect x="3" y="5" width="8" height="1.3" fill="#e89030"/><rect x="3" y="8" width="9" height="1" fill="#b0b0b0"/><rect x="3" y="11" width="9" height="1" fill="#b0b0b0"/><rect x="3" y="14" width="7" height="1" fill="#b0b0b0"/><rect x="15" y="4" width="7" height="1.3" fill="#c8dcf8"/><rect x="15" y="8" width="7" height="1.3" fill="#c8dcf8"/><rect x="15" y="12" width="7" height="1.3" fill="#c8dcf8"/><rect x="1" y="19" width="14" height="12" fill="#38a038"/><rect x="15" y="19" width="16" height="12" fill="#2870d0"/><rect x="17" y="21" width="13" height="8" fill="#3888e8"/><path d="M5 22Q6.5 21 8 22L7.6 24.5Q6.2 23.5 4.6 24.5Z" fill="#e85820"/><path d="M8.6 22.3Q10 23 11.5 22L11 24.5Q9.6 25.5 8.2 24.8Z" fill="#a8e060"/><path d="M4.5 25.2Q6 24.2 7.5 25.2L7 27.8Q5.6 26.8 4 27.8Z" fill="#60a8f8"/><path d="M8.1 25.5Q9.5 26.2 11 25.2L10.5 27.8Q9 28.8 7.6 28Z" fill="#f8d030"/></svg>
<div class="a" style="left:236px;top:371px;width:90px;text-align:center;line-height:13px;font-size:11px">Панель задач<br>и меню "Пуск"</div>
<svg class="a" style="left:340px;top:333px" width="32" height="32" viewBox="0 0 32 32"><rect x="1.5" y="1.5" width="29" height="29" rx="3.5" fill="#181818" stroke="#707070" stroke-width="1"/><rect x="4" y="4" width="24" height="15" fill="#80b818"/><path d="M6 12Q11 5 18 7Q23 8 26 12Q22 16 17 16.5Q10 17 6 12Z" fill="none" stroke="#181818" stroke-width="1.6"/><path d="M10 12Q13 8.5 17 9.5Q20 10.5 20 12.5Q18 14.5 15 14Q12 13.5 13 11.5" fill="none" stroke="#181818" stroke-width="1.4"/><path d="M17 4H28V19H17Z" fill="#80b818" opacity=".0"/><rect x="5" y="21.5" width="22" height="6.5" rx="3.2" fill="#c8c8c8" stroke="#f0f0f0" stroke-width=".8"/><rect x="9" y="23" width="8" height="3.5" rx="1" fill="#404040"/><circle cx="22.5" cy="24.8" r="2.2" fill="#70a818"/></svg>
<div class="a" style="left:311px;top:371px;width:90px;text-align:center;line-height:13px;font-size:11px">Панель<br>управлен...</div>
<svg class="a" style="left:415px;top:333px" width="32" height="32" viewBox="0 0 32 32"><circle cx="20" cy="13" r="10" fill="#1c62d4" stroke="#1448a8" stroke-width=".8"/><ellipse cx="17" cy="9" rx="5" ry="4" fill="#6ab0f8" opacity=".75"/><path d="M14.5 7.5q4.5 -3.5 8 -0.5q2 4 -1.5 5.5q-1 5 -4 2.5q-4.5 -1.5 -2.5 -7.5z" fill="#2e9e3a"/><path d="M23 14.5q4 -1 4 3q-1.5 3.5 -5 1.5z" fill="#2e9e3a"/><path d="M18 18q2 1 1 3.5q-2.5 -0.5 -1 -3.5z" fill="#2e9e3a"/><path d="M3 17L10 12L26 14L28 24L20 30L5 27Z" fill="#7090c8" stroke="#405890" stroke-width=".8"/><path d="M6 4L13 3V20L6 21Z" fill="#f8f8fc" stroke="#9098b0" stroke-width=".6"/><path d="M10 3.5L17 2.5V20L10 21Z" fill="#f0f0f8" stroke="#9098b0" stroke-width=".6"/><path d="M14 4L21 3V20L14 21Z" fill="#e8ecf8" stroke="#9098b0" stroke-width=".6"/><path d="M18 5L24 4V19L18 20Z" fill="#e0e4f4" stroke="#9098b0" stroke-width=".6"/><rect x="7" y="6" width="3" height="3" fill="#d83030"/><path d="M3 17L8 22L22 23.5L28 19V24L20 30L5 27Z" fill="#88a8e0" stroke="#405890" stroke-width=".8"/></svg>
<div class="a" style="left:386px;top:371px;width:90px;text-align:center;line-height:13px;font-size:11px">Почта</div>
<svg class="a" style="left:490px;top:333px" width="32" height="32" viewBox="0 0 32 32"><path d="M3 4Q3 2 5 2H9L10.5 4H14V16H3Z" fill="#e8c858" stroke="#c09828" stroke-width=".8"/><path d="M10 3L22 1.5L24 14L12 15Z" fill="#c8e0fc" stroke="#88a0c8" stroke-width=".7"/><path d="M7 15L21 12L30 16L30 24L16 29L6 23Z" fill="#e8e8ec" stroke="#888890" stroke-width=".9"/><path d="M7 15L21 12L30 16L16 20Z" fill="#fafafc" stroke="#98989c" stroke-width=".6"/><path d="M11 15.5L20 13.5L25.5 16L16.5 18.5Z" fill="#606068"/><path d="M16 20V29L30 24V16Z" fill="#c8c8d0"/><path d="M18 23.5L27 20.5V22.5L18 25.5Z" fill="#505058"/><path d="M17 26L29 22L31 25L19 30Z" fill="#f4f4f8" stroke="#a0a0a8" stroke-width=".5"/></svg>
<div class="a" style="left:461px;top:371px;width:90px;text-align:center;line-height:13px;font-size:11px">Принтеры и<br>факсы</div>
<svg class="a" style="left:565px;top:333px" width="32" height="32" viewBox="0 0 32 32"><path d="M12 8L24 5L26 20L14 23Z" fill="#5890e0" stroke="#2858a8" stroke-width="1"/><path d="M14 10L22.5 8L24 18.5L15.5 20.5Z" fill="#a0ccf8"/><path d="M17 23L23 21.5L24 25L17 26.5Z" fill="#a8b0c8"/><ellipse cx="20.5" cy="27" rx="6" ry="2.3" fill="#b8c0d8"/><ellipse cx="26" cy="6" rx="5.5" ry="4.3" fill="#f8c848" stroke="#c88818" stroke-width=".9"/><path d="M22.5 9L20 13L25 10Z" fill="#f8c848" stroke="#c88818" stroke-width=".7"/><path d="M23.5 4.8H28.5M23.5 6.8H28" stroke="#c88818" stroke-width=".9"/><circle cx="8.5" cy="13.5" r="4.6" fill="#f0a030" stroke="#b86810" stroke-width=".8"/><path d="M4.5 12Q8.5 7 12.5 12Q9 10.5 4.5 12Z" fill="#c87010"/><path d="M1 29Q1 20 8.5 20Q16 20 16 29Z" fill="#40a840" stroke="#187818" stroke-width=".8"/><path d="M6.5 20.5L8.5 24L10.5 20.5Z" fill="#f8f8f8"/></svg>
<div class="a" style="left:536px;top:371px;width:90px;text-align:center;line-height:13px;font-size:11px">Речь</div>
<svg class="a" style="left:640px;top:333px" width="32" height="32" viewBox="0 0 32 32"><circle cx="21" cy="12" r="10.5" fill="#1c62d4" stroke="#1448a8" stroke-width=".8"/><ellipse cx="17.85" cy="7.8" rx="5.25" ry="4.2" fill="#6ab0f8" opacity=".75"/><path d="M15.225 6.225q4.7250000000000005 -3.675 8.4 -0.525q2.1 4.2 -1.575 5.775q-1.05 5.25 -4.2 2.625q-4.7250000000000005 -1.575 -2.625 -7.875z" fill="#2e9e3a"/><path d="M24.15 13.575q4.2 -1.05 4.2 3.15q-1.575 3.675 -5.25 1.575z" fill="#2e9e3a"/><path d="M18.9 17.25q2.1 1.05 1.05 3.675q-2.625 -0.525 -1.05 -3.675z" fill="#2e9e3a"/><path d="M3 6L18 4L19 19L5 21Z" fill="#5898e8" stroke="#2858a8" stroke-width="1"/><path d="M5 8L16 6L17 17L6.5 19Z" fill="#a8d4fc"/><path d="M9 21L15 20L16 25L8 26Z" fill="#b8c0d0"/><ellipse cx="12" cy="27" rx="7" ry="2.6" fill="#c8d0e0" stroke="#8890a8" stroke-width=".6"/><path d="M6.5 14L10.5 19L17.5 6" stroke="#a01828" stroke-width="2.2" fill="none"/></svg>
<div class="a" style="left:611px;top:371px;width:90px;text-align:center;line-height:13px;font-size:11px">Свойства<br>обозревателя</div>
<svg class="a" style="left:715px;top:333px" width="32" height="32" viewBox="0 0 32 32"><path d="M4 7Q4 5 6 5H12L14 7H25Q27 7 27 9V26H4Z" fill="#e0bc48" stroke="#b89020" stroke-width=".8"/><path d="M8 12H30Q31 12 30.6 13.5L26 27H3Z" fill="#fcec98" stroke="#c8a030" stroke-width=".8"/><path d="M13 18L17 23L24 10" stroke="#a01828" stroke-width="2.2" fill="none"/></svg>
<div class="a" style="left:686px;top:371px;width:90px;text-align:center;line-height:13px;font-size:11px">Свойства<br>папки</div>
<svg class="a" style="left:265px;top:408px" width="32" height="32" viewBox="0 0 32 32"><circle cx="13" cy="13" r="11.5" fill="#1c62d4" stroke="#1448a8" stroke-width=".8"/><ellipse cx="9.55" cy="8.399999999999999" rx="5.75" ry="4.6000000000000005" fill="#6ab0f8" opacity=".75"/><path d="M6.675 6.675q5.175 -4.0249999999999995 9.200000000000001 -0.5750000000000001q2.3000000000000003 4.6000000000000005 -1.7249999999999999 6.325q-1.1500000000000001 5.75 -4.6000000000000005 2.875q-5.175 -1.7249999999999999 -2.875 -8.625z" fill="#2e9e3a"/><path d="M16.45 14.725q4.6000000000000005 -1.1500000000000001 4.6000000000000005 3.4499999999999997q-1.7249999999999999 4.0249999999999995 -5.75 1.7249999999999999z" fill="#2e9e3a"/><path d="M10.7 18.75q2.3000000000000003 1.1500000000000001 1.1500000000000001 4.0249999999999995q-2.875 -0.5750000000000001 -1.1500000000000001 -4.0249999999999995z" fill="#2e9e3a"/><path d="M17 17L24 15L27 19L20 21.5Z" fill="#c8d4e8" stroke="#6080b0" stroke-width=".8"/><path d="M20 21.5L27 19L28 24L21 27Z" fill="#a0b8dc" stroke="#6080b0" stroke-width=".8"/><path d="M22 27Q20 31 15 29.5" stroke="#a8c0e8" stroke-width="2.6" fill="none"/><path d="M22 27Q20 31 15 29.5" stroke="#d8e4f8" stroke-width="1.2" fill="none"/></svg>
<div class="a" style="left:236px;top:446px;width:90px;text-align:center;line-height:13px;font-size:11px">Сетевые<br>подключения</div>
<svg class="a" style="left:340px;top:408px" width="32" height="32" viewBox="0 0 32 32"><path d="M19 5L28 3.5L30 6V23L21 26Z" fill="#d0d4e4" stroke="#8088a8" stroke-width=".8"/><path d="M21 8L28 6.5M21 11L28 9.5M21 14L28 12.5" stroke="#8890b0" stroke-width="1"/><path d="M19 5L21 8V26L19 23Z" fill="#a8b0c8"/><path d="M2 5L17 3L18 18L4 20Z" fill="#5898e8" stroke="#2858a8" stroke-width="1"/><path d="M4 7L15 5L16 16L5.5 18Z" fill="#a8d4fc"/><path d="M8 20L14 19L15 24L7 25Z" fill="#b8c0d0"/><ellipse cx="11" cy="26" rx="7" ry="2.6" fill="#c8d0e0" stroke="#8890a8" stroke-width=".6"/><path d="M6 13.5L10 18.5L17 5.5" stroke="#a01828" stroke-width="2.2" fill="none"/></svg>
<div class="a" style="left:311px;top:446px;width:90px;text-align:center;line-height:13px;font-size:11px"><span style="background:#d4d0c8;padding:1px 1px 2px 1px">Система</span></div>
<svg class="a" style="left:415px;top:408px" width="32" height="32" viewBox="0 0 32 32"><path d="M1 5Q1 3 3 3H8L10 5H17V17H1Z" fill="#e8c858" stroke="#c09828" stroke-width=".8"/><path d="M0 9H16L15 18H1Z" fill="#fce890" stroke="#c8a030" stroke-width=".7"/><rect x="15" y="3" width="16" height="12" rx="1.5" fill="#c0c4cc" stroke="#70747c" stroke-width=".9"/><rect x="17" y="1.5" width="6" height="2.5" fill="#a0a4ac"/><circle cx="24" cy="9" r="4.3" fill="#606878" stroke="#e8e8f0" stroke-width="1.2"/><circle cx="24" cy="9" r="2" fill="#2838a0"/><path d="M3 18L22 14L31 18L12 24Z" fill="#485878" stroke="#283858" stroke-width=".8"/><path d="M12 24L31 18V22L14 30L3 26V18Z" fill="#d8dce8" stroke="#8088a0" stroke-width=".8"/><path d="M8 22L24 17.5L27 19L12 24Z" fill="#98c8f0"/></svg>
<div class="a" style="left:386px;top:446px;width:90px;text-align:center;line-height:13px;font-size:11px">Сканеры и<br>камеры</div>
<svg class="a" style="left:490px;top:408px" width="32" height="32" viewBox="0 0 32 32"><circle cx="14" cy="5" r="3.6" fill="#2a982a"/><path d="M12.5 9.5H16.5L17.3 16H24L26.8 24.5L30 23" stroke="#2a982a" stroke-width="4.2" fill="none" stroke-linejoin="round"/><path d="M13 12.8Q4.8 14.5 4.8 21.8Q4.8 29.3 13.2 29.3Q19.5 29.3 21.8 23.5" stroke="#2a982a" stroke-width="4.4" fill="none"/><path d="M12.5 12.5Q4.5 14.5 4.3 20.5" stroke="#78d868" stroke-width="1.3" fill="none"/><path d="M13 4Q14 2.5 15.5 3.2" stroke="#78d868" stroke-width="1.1" fill="none"/></svg>
<div class="a" style="left:461px;top:446px;width:90px;text-align:center;line-height:13px;font-size:11px">Специальные<br>возможности</div>
<svg class="a" style="left:565px;top:408px" width="32" height="32" viewBox="0 0 32 32"><rect x="6" y="1" width="2" height="8" fill="#505058"/><rect x="4" y="7" width="10" height="23" rx="2.5" fill="#8c9098" stroke="#484c54" stroke-width=".9"/><rect x="6" y="10" width="6" height="8" fill="#70d040" stroke="#306018" stroke-width=".6"/><path d="M6 20.5H12M6 23H12M6 25.5H12" stroke="#383c44" stroke-width="1.3" stroke-dasharray="1.4 .9"/><path d="M12 22L22 17L31 21L21 27Z" fill="#c8d0e8" stroke="#6870a0" stroke-width=".8"/><path d="M12 22L21 27V31L12 26Z" fill="#8890c0" stroke="#6870a0" stroke-width=".6"/><path d="M21 27L31 21V25L21 31Z" fill="#a0a8d0" stroke="#6870a0" stroke-width=".6"/><path d="M23 28L29 24.5" stroke="#e03030" stroke-width="1.3" stroke-dasharray="1.5 1"/></svg>
<div class="a" style="left:536px;top:446px;width:90px;text-align:center;line-height:13px;font-size:11px">Телефон и<br>модем</div>
<svg class="a" style="left:640px;top:408px" width="32" height="32" viewBox="0 0 32 32"><path d="M4 7L18 3L24 6L10 10Z" fill="#e8ecf4" stroke="#8890a8" stroke-width=".7"/><path d="M4 7L10 10V30L4 26Z" fill="#b8c4dc" stroke="#8890a8" stroke-width=".7"/><path d="M10 10L24 6V26L10 30Z" fill="#f0f2f8" stroke="#8890a8" stroke-width=".7"/><rect x="11.5" y="13" width="8" height="5.5" fill="#4888e0" transform="skewY(-16) translate(0 4.5)"/><rect x="11.5" y="19" width="8" height="6" fill="#50b040" transform="skewY(-16) translate(0 4.5)"/><circle cx="22" cy="20" r="9.3" fill="#c0c0e4" stroke="#7878b0" stroke-width=".9"/><path d="M22 10.7A9.3 9.3 0 0 1 31.3 20L22 20Z" fill="#e0e0f8"/><path d="M12.7 20A9.3 9.3 0 0 0 22 29.3L22 20Z" fill="#a8a8d8"/><circle cx="22" cy="20" r="2.8" fill="#fff" stroke="#8080b8" stroke-width=".8"/></svg>
<div class="a" style="left:611px;top:446px;width:90px;text-align:center;line-height:13px;font-size:11px">Установка и<br>удаление...</div>
<svg class="a" style="left:715px;top:408px" width="32" height="32" viewBox="0 0 32 32"><path d="M3 6L18 2L29 5L14 9.5Z" fill="#389048" stroke="#185828" stroke-width=".8"/><path d="M7 5.5L17 3M10 7L21 4M15 8L26 5" stroke="#a0e0a8" stroke-width=".8"/><path d="M3 6L14 9.5V12L3 8.5Z" fill="#287038"/><path d="M14 9.5L29 5V7.5L14 12Z" fill="#206030"/><path d="M2 13L18 9L30 13L14 18Z" fill="#7078c8" stroke="#383c88" stroke-width=".8"/><path d="M2 13L14 18V22L2 17Z" fill="#4850a0" stroke="#383c88" stroke-width=".6"/><path d="M14 18L30 13V17L14 22Z" fill="#5860b0" stroke="#383c88" stroke-width=".6"/><path d="M16 19L22 17" stroke="#e04040" stroke-width="1.2"/><path d="M8 21Q2 24 8 26L17 25" stroke="#9098a8" stroke-width="1.4" fill="none"/><path d="M16 23L26 25.5L27 30L17 27.5Z" fill="#e8b040" stroke="#906010" stroke-width=".8"/><path d="M26 25.5L30.5 27L31 30.5L27 30Z" fill="#d0d4dc" stroke="#70747c" stroke-width=".7"/></svg>
<div class="a" style="left:686px;top:446px;width:90px;text-align:center;line-height:13px;font-size:11px">Установка<br>оборудова...</div>
<svg class="a" style="left:265px;top:483px" width="32" height="32" viewBox="0 0 32 32"><circle cx="10" cy="9" r="6" fill="#402818"/><circle cx="10.5" cy="10" r="4.3" fill="#c07848"/><path d="M1 28Q1 17 10 17Q17 17 18 24V28Z" fill="#3070d0" stroke="#184898" stroke-width=".8"/><path d="M7.5 17.5L10 22L12.5 17.5Z" fill="#f4f4f8"/><circle cx="21.5" cy="10" r="5.5" fill="#f0b050" stroke="#c07818" stroke-width=".7"/><path d="M16.5 8.5Q21.5 2.5 26.5 8.5Q22 6.5 16.5 8.5Z" fill="#e09028"/><path d="M13 30Q13 19 21.5 19Q30.5 19 30.5 30Z" fill="#48b048" stroke="#207820" stroke-width=".8"/><path d="M19 19.5L21.5 24L24 19.5Z" fill="#f4f4f8"/></svg>
<div class="a" style="left:236px;top:521px;width:90px;text-align:center;line-height:13px;font-size:11px">Учетные<br>записи пол...</div>
<svg class="a" style="left:340px;top:483px" width="32" height="32" viewBox="0 0 32 32"><path d="M16 1.5Q22 5 29 5Q30 20 16 30.5Q2 20 3 5Q10 5 16 1.5Z" fill="#3060b8" stroke="#183878" stroke-width="1"/><path d="M16 4Q21 7 26.8 7Q27.5 19 16 28Q4.5 19 5.2 7Q11 7 16 4Z" fill="#d8e0f0"/><path d="M16 4.5Q11 7.5 5.7 7.5Q5.5 12 7 16H16Z" fill="#e84820"/><path d="M16 4.5Q21 7.5 26.3 7.5Q26.5 12 25 16H16Z" fill="#68b830"/><path d="M7 16H16V27.5Q9.5 22.5 7 16Z" fill="#3888e8"/><path d="M25 16H16V27.5Q22.5 22.5 25 16Z" fill="#f8c820"/></svg>
<div class="a" style="left:311px;top:521px;width:90px;text-align:center;line-height:13px;font-size:11px">Центр<br>обеспечен...</div>
<svg class="a" style="left:415px;top:483px" width="32" height="32" viewBox="0 0 32 32"><path d="M4 7Q4 5 6 5H12L14 7H25Q27 7 27 9V26H4Z" fill="#e0bc48" stroke="#b89020" stroke-width=".8"/><path d="M8 12H30Q31 12 30.6 13.5L26 27H3Z" fill="#fcec98" stroke="#c8a030" stroke-width=".8"/><path d="M17 22L25 2L28 2L29 20Z" fill="#38a038" stroke="#186818" stroke-width=".7"/><path d="M12 25L19 10L22 10L24 25H21L20.5 21H16.5L15 25Z" fill="#e8d040" stroke="#a08810" stroke-width=".7"/></svg>
<div class="a" style="left:386px;top:521px;width:90px;text-align:center;line-height:13px;font-size:11px">Шрифты</div>
<svg class="a" style="left:490px;top:483px" width="32" height="32" viewBox="0 0 32 32"><path d="M4 5L20 2L22 18L6 21Z" fill="#5090e0" stroke="#2858a8" stroke-width="1"/><path d="M6 7L18.5 4.5L20 16.5L7.5 19Z" fill="#98c8f8"/><path d="M10 21L17 19.5L18 24L10 25.5Z" fill="#a8b0c8"/><ellipse cx="13.5" cy="27" rx="8" ry="3" fill="#c0c8dc" stroke="#8890a8" stroke-width=".6"/><path d="M12 11L15 8.5L31 21L29 23.5Z" fill="#38a838" stroke="#186818" stroke-width=".7"/><path d="M8 9L14 6.5L16 11L10 13.5Z" fill="#d8a050" stroke="#805818" stroke-width=".7"/></svg>
<div class="a" style="left:461px;top:521px;width:90px;text-align:center;line-height:13px;font-size:11px">Экран</div>
<svg class="a" style="left:565px;top:483px" width="32" height="32" viewBox="0 0 32 32"><rect x="11" y="3" width="10" height="16" rx="3" fill="#e8e8f0" stroke="#9098a8" stroke-width=".9"/><rect x="13.5" y="1" width="5" height="3" rx="1" fill="#c0c4cc"/><rect x="11.5" y="6" width="9" height="6" fill="#d84828"/><rect x="11.5" y="6" width="9" height="2" fill="#f08060"/><path d="M9 10Q4 10 5 15" stroke="#b0b4c0" stroke-width="1.5" fill="none"/><path d="M22 12Q28 10 27 18" stroke="#a0a4b4" stroke-width="1.6" fill="none"/><path d="M18 19L24 16L29 21L26 26L20 25Z" fill="#c8ccd8" stroke="#787c90" stroke-width=".8"/><path d="M21 25L19 30M25 26L24.5 30.5" stroke="#a0a4b0" stroke-width="1.8"/><ellipse cx="15" cy="22" rx="6" ry="2" fill="#d0d4dc" opacity=".6"/></svg>
<div class="a" style="left:536px;top:521px;width:90px;text-align:center;line-height:13px;font-size:11px">Электропи...</div>
</div></div>
<!-- ===== PROPERTIES DIALOG ===== -->
<div id="props" class="a win" style="left:44px;top:44px;width:419px;height:497px">
<div class="a tgray" style="left:3px;top:3px;width:411px;height:18px"></div>
<div class="t b" style="left:5px;top:5px;color:#d4d0c8;letter-spacing:.37px">Свойства: Неизвестное устройство</div>
<div class="a" style="left:11px;top:31px;width:60px;height:20px;border:1px solid;border-color:#fff transparent transparent #fff;border-radius:3px 0 0 0"></div>
<div class="a" style="left:11px;top:49px;width:60px;height:20px;border:1px solid;border-color:#fff transparent transparent #fff;border-radius:3px 0 0 0"></div>
<div class="a" style="left:11px;top:67px;width:60px;height:20px;border:1px solid;border-color:#fff transparent transparent #fff;border-radius:3px 0 0 0"></div>
<div class="a" style="left:9px;top:85px;width:402px;height:373px;border:1px solid;border-color:#fff #404040 #404040 #fff;box-shadow:inset -1px -1px 0 #808080"></div>
<div class="a" style="left:24px;top:112px;width:1px;height:96px;background:#808080"></div><div class="a" style="left:25px;top:112px;width:1px;height:96px;background:#fff"></div>
<div class="a" style="left:24px;top:222px;width:1px;height:120px;background:#808080"></div><div class="a" style="left:25px;top:222px;width:1px;height:120px;background:#fff"></div>
<div class="a" style="left:24px;top:352px;width:1px;height:90px;background:#808080"></div><div class="a" style="left:25px;top:352px;width:1px;height:90px;background:#fff"></div>
<div class="btn" style="left:173px;top:464px;width:75px;height:23px;line-height:20px">OK</div>
<div class="btn" style="left:254px;top:464px;width:75px;height:23px;line-height:20px">Отмена</div>
<div class="btn" style="left:335px;top:464px;width:75px;height:23px;line-height:20px;color:#181818">Применить</div>
</div>
<!-- ===== DEVICE MANAGER ===== -->
<div id="dm" class="a win" style="left:71px;top:42px;width:640px;height:451px"><div class="a" style="left:2px;top:1px">
<div class="a tgray" style="left:2px;top:3px;width:631px;height:18px"></div>
<svg class="a" style="left:4px;top:4px" width="17" height="16"><rect x="3.5" y="1.5" width="10" height="8" fill="#d0d0d0" stroke="#000" stroke-width="1"/><rect x="5" y="3" width="7" height="5" fill="#0000c0"/><path d="M1 13L3.5 10.5H13.5L15.5 13V14.5H1Z" fill="#e8e8e8" stroke="#000" stroke-width=".9"/><path d="M3 12.5H13" stroke="#000" stroke-width=".8" stroke-dasharray="1 1"/><path d="M13.5 9V15.5H16" stroke="#000" stroke-width=".8" fill="none"/></svg>
<div class="t b" style="left:23px;top:5px;color:#d4d0c8;letter-spacing:.43px">Диспетчер устройств</div>
<div class="cap" style="left:582px;top:5px"><div class="a" style="left:3px;top:8px;width:6px;height:2px;background:#000"></div></div><div class="cap" style="left:598px;top:5px"><div class="a" style="left:2px;top:1px;width:9px;height:9px;border:1px solid #000;border-top-width:2px"></div></div><div class="cap" style="left:616px;top:5px"><svg class="a" style="left:3px;top:2px" width="8" height="7"><path d="M0 0L7 7M1 0L8 7M7 0L0 7M8 0L1 7" stroke="#000" stroke-width="1" shape-rendering="crispEdges"/></svg></div>
<div class="a" style="left:2px;top:23px;width:631px;height:1px;background:#fff"></div>
<div class="t" style="left:11px;top:28px">Консоль</div>
<div class="t" style="left:70px;top:28px">Действие</div>
<div class="t" style="left:134px;top:28px">Вид</div>
<div class="t" style="left:169px;top:28px">Справка</div>
<div class="a" style="left:3px;top:46px;width:630px;height:1px;background:#808080"></div>
<div class="a" style="left:3px;top:47px;width:630px;height:1px;background:#fff"></div>
<svg class="a" style="left:9px;top:51px" width="16" height="16" viewBox="0 0 16 16"><path d="M1 8L6.5 3V6.3H13.5V9.7H6.5V13Z" fill="#808080"/><path d="M6.5 13L6.5 9.7H13.5" fill="none" stroke="#fff" stroke-width=".8" transform="translate(.6 .6)"/></svg>
<svg class="a" style="left:31px;top:51px" width="16" height="16" viewBox="0 0 16 16"><path d="M14 8L8.5 3V6.3H1.5V9.7H8.5V13Z" fill="#808080"/><path d="M1.5 9.7H8.5V13L14 8" fill="none" stroke="#fff" stroke-width=".8" transform="translate(.6 .6)"/></svg>
<div class="a" style="left:53px;top:49px;width:1px;height:19px;background:#808080"></div><div class="a" style="left:54px;top:49px;width:1px;height:19px;background:#fff"></div>
<svg class="a" style="left:61px;top:51px" width="16" height="16" viewBox="0 0 16 16"><rect x="1" y="2" width="14" height="12" fill="#fff" stroke="#000080" stroke-width="1.3"/><rect x="1" y="2" width="14" height="2.5" fill="#000080"/><path d="M7 4V14" stroke="#000080"/><path d="M3 6.5H5M3 9H5M3 11.5H5" stroke="#000" /><path d="M12.5 6L9.5 9L12.5 12Z" fill="#000"/></svg>
<div class="a" style="left:84px;top:49px;width:1px;height:19px;background:#808080"></div><div class="a" style="left:85px;top:49px;width:1px;height:19px;background:#fff"></div>
<svg class="a" style="left:92px;top:51px" width="16" height="16" viewBox="0 0 16 16"><rect x="1.5" y="4.5" width="11" height="10" fill="#fff" stroke="#000" stroke-width="1"/><path d="M3.5 7.5H6M3.5 10H10.5M3.5 12H10.5" stroke="#000"/><path d="M7 1L12 3L10.5 7.5L7.5 5.5Z" fill="#d8d8d8" stroke="#000" stroke-width=".8"/><rect x="12" y="1" width="3" height="4" fill="#000080"/></svg>
<svg class="a" style="left:115px;top:51px" width="16" height="16" viewBox="0 0 16 16"><path d="M4.5 1.5H12L13.5 6H3Z" fill="#fff" stroke="#000" stroke-width="1"/><path d="M1 7Q1 5.8 2.2 5.8H13.8Q15 5.8 15 7V11.5H1Z" fill="#c8c8c8" stroke="#000" stroke-width="1"/><path d="M2.5 10H13.5V14H2.5Z" fill="#e8e8e8" stroke="#000" stroke-width="1"/><path d="M3.5 8H12.5" stroke="#000" stroke-width="1.3"/><path d="M4.5 12H11.5" stroke="#606060"/></svg>
<div class="a" style="left:138px;top:49px;width:1px;height:19px;background:#808080"></div><div class="a" style="left:139px;top:49px;width:1px;height:19px;background:#fff"></div>
<svg class="a" style="left:146px;top:51px" width="16" height="16" viewBox="0 0 16 16"><rect x="1.5" y="5.5" width="9" height="9" fill="#fff" stroke="#000"/><path d="M3 8.5H7M3 11H8.5" stroke="#000"/><path d="M7.8 4.8Q7.8 1.5 10.8 1.5Q13.8 1.5 13.8 4.3Q13.8 6 12.2 7Q11.5 7.5 11.5 8.8H9.5Q9.5 6.8 10.8 6Q11.8 5.3 11.8 4.3Q11.8 3.3 10.8 3.3Q9.8 3.3 9.8 4.8Z" fill="#f8e800" stroke="#000" stroke-width=".9"/><rect x="9.4" y="10.2" width="2.3" height="2.3" fill="#f8e800" stroke="#000" stroke-width=".9"/></svg>
<svg class="a" style="left:169px;top:51px" width="16" height="16" viewBox="0 0 16 16"><rect x="1" y="2" width="14" height="12" fill="#fff" stroke="#000080" stroke-width="1.3"/><rect x="1" y="2" width="14" height="2.5" fill="#000080"/><path d="M9.5 4V14" stroke="#000080"/><path d="M11.5 6.5H13.5M11.5 9H13.5M11.5 11.5H13.5" stroke="#000"/><path d="M4 6L7 9L4 12Z" fill="#000"/></svg>
<div class="a" style="left:192px;top:49px;width:1px;height:19px;background:#808080"></div><div class="a" style="left:193px;top:49px;width:1px;height:19px;background:#fff"></div>
<svg class="a" style="left:200px;top:51px" width="16" height="16" viewBox="0 0 16 16"><rect x="1.5" y="1.5" width="12" height="10" fill="#3878e0" stroke="#000060" stroke-width="1"/><rect x="3" y="3" width="9" height="7" fill="#68b0f8"/><rect x="4" y="12" width="8" height="1.5" fill="#909090"/><rect x="1.5" y="13.5" width="13" height="2" fill="#c0c0c0" stroke="#404040" stroke-width=".6"/><circle cx="6" cy="6" r="2.6" fill="#d8f0ff" stroke="#000" stroke-width=".9"/><path d="M8 8L12.5 12.5" stroke="#000" stroke-width="1.8"/></svg>
<div class="a" style="left:223px;top:49px;width:1px;height:19px;background:#808080"></div><div class="a" style="left:224px;top:49px;width:1px;height:19px;background:#fff"></div>
<svg class="a" style="left:231px;top:51px" width="16" height="16" viewBox="0 0 16 16"><path d="M1 6L8 3L15 5L8 8.5Z" fill="#58a868" stroke="#286038" stroke-width=".7"/><path d="M2 10L9 7L15 9.5L8 12.5Z" fill="#a0a0a0" stroke="#585858" stroke-width=".7"/><path d="M4 5.5L10 4M5 7L12 5" stroke="#c8f0d0" stroke-width=".7"/></svg>
<svg class="a" style="left:254px;top:51px" width="16" height="16" viewBox="0 0 16 16"><rect x="2.5" y="1.5" width="11" height="9" fill="#3050d0" stroke="#000060" stroke-width="1"/><rect x="4" y="3" width="8" height="6" fill="#4888f0"/><rect x="1.5" y="12" width="13" height="2.5" fill="#c0c0c0" stroke="#404040" stroke-width=".6"/><path d="M2 2L14 14M14 2L2 14" stroke="#a00010" stroke-width="2.4"/></svg>
<svg class="a" style="left:277px;top:51px" width="16" height="16" viewBox="0 0 16 16"><rect x="4.5" y="1.5" width="10" height="9" fill="#3050d0" stroke="#000060" stroke-width="1"/><rect x="6" y="3" width="7" height="6" fill="#4888f0"/><rect x="4" y="12" width="11" height="2.5" fill="#c0c0c0" stroke="#404040" stroke-width=".6"/><circle cx="6" cy="10" r="4.6" fill="none" stroke="#a00010" stroke-width="2.2"/><path d="M2.8 13.2L9.2 6.8" stroke="#a00010" stroke-width="2.2"/></svg>
<div class="a" style="left:3px;top:70px;width:630px;height:1px;background:#808080"></div>
<div class="a" style="left:3px;top:71px;width:630px;height:1px;background:#fff"></div>
<div class="a" style="left:2px;top:73px;width:634px;height:353px;background:#fff;border:1px solid;border-color:#808080 #fff #fff #808080;box-shadow:inset 1px 1px 0 #404040,inset -1px -1px 0 #d4d0c8;overflow:hidden" id="tree">
<div class="a" style="left:28px;top:0;width:1px;height:356px;background-image:repeating-linear-gradient(180deg,#808080 0 1px,transparent 1px 2px)"></div>
<div class="a" style="left:47px;top:0px;width:1px;height:106px;background-image:repeating-linear-gradient(180deg,#808080 0 1px,transparent 1px 2px)"></div>
<div class="a" style="left:47px;top:202px;width:1px;height:32px;background-image:repeating-linear-gradient(180deg,#808080 0 1px,transparent 1px 2px)"></div>
<div class="a" style="left:47px;top:298px;width:1px;height:32px;background-image:repeating-linear-gradient(180deg,#808080 0 1px,transparent 1px 2px)"></div>
<div class="a" style="left:48px;top:10px;width:10px;height:1px;background-image:repeating-linear-gradient(90deg,#808080 0 1px,transparent 1px 2px)"></div>
<svg class="a" style="left:58px;top:3px" width="16" height="16" viewBox="0 0 16 16"><rect x=".700" y="1.7" width="13" height="7.5" rx="1.8" fill="#d4d4d4" stroke="#585858" stroke-width="1.1"/><path d="M3 4.5H11.5" stroke="#909090" stroke-width="1"/><rect x="2.6" y="5.6" width="12.8" height="8.8" rx="1.8" fill="#e4e4e4" stroke="#404040" stroke-width="1.3"/><path d="M3.5 13.6H14.6V7" stroke="#707070" stroke-width="1" fill="none"/><rect x="5" y="8.2" width="8" height="1.3" fill="#707070"/><rect x="5" y="10.8" width="8" height="1.3" fill="#a0a0a0"/></svg>
<div class="t" style="left:78px;top:3px;letter-spacing:-0.045px">Вторичный канал IDE</div>
<div class="a" style="left:48px;top:26px;width:10px;height:1px;background-image:repeating-linear-gradient(90deg,#808080 0 1px,transparent 1px 2px)"></div>
<svg class="a" style="left:58px;top:19px" width="16" height="16" viewBox="0 0 16 16"><rect x=".700" y="1.7" width="13" height="7.5" rx="1.8" fill="#d4d4d4" stroke="#585858" stroke-width="1.1"/><path d="M3 4.5H11.5" stroke="#909090" stroke-width="1"/><rect x="2.6" y="5.6" width="12.8" height="8.8" rx="1.8" fill="#e4e4e4" stroke="#404040" stroke-width="1.3"/><path d="M3.5 13.6H14.6V7" stroke="#707070" stroke-width="1" fill="none"/><rect x="5" y="8.2" width="8" height="1.3" fill="#707070"/><rect x="5" y="10.8" width="8" height="1.3" fill="#a0a0a0"/></svg>
<div class="t" style="left:78px;top:19px;letter-spacing:-0.045px">Вторичный канал IDE</div>
<div class="a" style="left:48px;top:42px;width:10px;height:1px;background-image:repeating-linear-gradient(90deg,#808080 0 1px,transparent 1px 2px)"></div>
<svg class="a" style="left:58px;top:35px" width="16" height="16" viewBox="0 0 16 16"><rect x=".700" y="1.7" width="13" height="7.5" rx="1.8" fill="#d4d4d4" stroke="#585858" stroke-width="1.1"/><path d="M3 4.5H11.5" stroke="#909090" stroke-width="1"/><rect x="2.6" y="5.6" width="12.8" height="8.8" rx="1.8" fill="#e4e4e4" stroke="#404040" stroke-width="1.3"/><path d="M3.5 13.6H14.6V7" stroke="#707070" stroke-width="1" fill="none"/><rect x="5" y="8.2" width="8" height="1.3" fill="#707070"/><rect x="5" y="10.8" width="8" height="1.3" fill="#a0a0a0"/><circle cx="11" cy="9.5" r="5.2" fill="#f8f000"/><rect x="10.2" y="6" width="1.8" height="4.5" fill="#000"/><rect x="10.2" y="11.5" width="1.8" height="1.8" fill="#000"/></svg>
<div class="t" style="left:78px;top:35px;letter-spacing:0.015px">Неизвестное устройство</div>
<div class="a" style="left:48px;top:58px;width:10px;height:1px;background-image:repeating-linear-gradient(90deg,#808080 0 1px,transparent 1px 2px)"></div>
<svg class="a" style="left:58px;top:51px" width="16" height="16" viewBox="0 0 16 16"><rect x=".700" y="1.7" width="13" height="7.5" rx="1.8" fill="#d4d4d4" stroke="#585858" stroke-width="1.1"/><path d="M3 4.5H11.5" stroke="#909090" stroke-width="1"/><rect x="2.6" y="5.6" width="12.8" height="8.8" rx="1.8" fill="#e4e4e4" stroke="#404040" stroke-width="1.3"/><path d="M3.5 13.6H14.6V7" stroke="#707070" stroke-width="1" fill="none"/><rect x="5" y="8.2" width="8" height="1.3" fill="#707070"/><rect x="5" y="10.8" width="8" height="1.3" fill="#a0a0a0"/></svg>
<div class="t" style="left:78px;top:51px;letter-spacing:-0.064px">Первичный канал IDE</div>
<div class="a" style="left:48px;top:74px;width:10px;height:1px;background-image:repeating-linear-gradient(90deg,#808080 0 1px,transparent 1px 2px)"></div>
<svg class="a" style="left:58px;top:67px" width="16" height="16" viewBox="0 0 16 16"><rect x=".700" y="1.7" width="13" height="7.5" rx="1.8" fill="#d4d4d4" stroke="#585858" stroke-width="1.1"/><path d="M3 4.5H11.5" stroke="#909090" stroke-width="1"/><rect x="2.6" y="5.6" width="12.8" height="8.8" rx="1.8" fill="#e4e4e4" stroke="#404040" stroke-width="1.3"/><path d="M3.5 13.6H14.6V7" stroke="#707070" stroke-width="1" fill="none"/><rect x="5" y="8.2" width="8" height="1.3" fill="#707070"/><rect x="5" y="10.8" width="8" height="1.3" fill="#a0a0a0"/></svg>
<div class="t" style="left:78px;top:67px;letter-spacing:-0.064px">Первичный канал IDE</div>
<div class="a" style="left:48px;top:90px;width:10px;height:1px;background-image:repeating-linear-gradient(90deg,#808080 0 1px,transparent 1px 2px)"></div>
<svg class="a" style="left:58px;top:83px" width="16" height="16" viewBox="0 0 16 16"><rect x=".700" y="1.7" width="13" height="7.5" rx="1.8" fill="#d4d4d4" stroke="#585858" stroke-width="1.1"/><path d="M3 4.5H11.5" stroke="#909090" stroke-width="1"/><rect x="2.6" y="5.6" width="12.8" height="8.8" rx="1.8" fill="#e4e4e4" stroke="#404040" stroke-width="1.3"/><path d="M3.5 13.6H14.6V7" stroke="#707070" stroke-width="1" fill="none"/><rect x="5" y="8.2" width="8" height="1.3" fill="#707070"/><rect x="5" y="10.8" width="8" height="1.3" fill="#a0a0a0"/></svg>
<div class="t" style="left:78px;top:83px;letter-spacing:0.047px">Стандартный двухканальный контроллер PCI IDE</div>
<div class="a" style="left:48px;top:106px;width:10px;height:1px;background-image:repeating-linear-gradient(90deg,#808080 0 1px,transparent 1px 2px)"></div>
<svg class="a" style="left:58px;top:99px" width="16" height="16" viewBox="0 0 16 16"><rect x=".700" y="1.7" width="13" height="7.5" rx="1.8" fill="#d4d4d4" stroke="#585858" stroke-width="1.1"/><path d="M3 4.5H11.5" stroke="#909090" stroke-width="1"/><rect x="2.6" y="5.6" width="12.8" height="8.8" rx="1.8" fill="#e4e4e4" stroke="#404040" stroke-width="1.3"/><path d="M3.5 13.6H14.6V7" stroke="#707070" stroke-width="1" fill="none"/><rect x="5" y="8.2" width="8" height="1.3" fill="#707070"/><rect x="5" y="10.8" width="8" height="1.3" fill="#a0a0a0"/></svg>
<div class="t" style="left:78px;top:99px;letter-spacing:0.047px">Стандартный двухканальный контроллер PCI IDE</div>
<div class="a" style="left:33px;top:122px;width:7px;height:1px;background-image:repeating-linear-gradient(90deg,#808080 0 1px,transparent 1px 2px)"></div>
<div class="a" style="left:24px;top:118px;width:9px;height:9px;background:#fff;border:1px solid #808080"><div class="a" style="left:1px;top:3px;width:5px;height:1px;background:#000"></div><div class="a" style="left:3px;top:1px;width:1px;height:5px;background:#000"></div></div>
<svg class="a" style="left:39px;top:115px" width="16" height="16" viewBox="0 0 16 16"><path d="M8 .500L15.5 7L8 12.5L.500 7Z" fill="#c0c0c0" stroke="#404040" stroke-width=".8"/><path d="M8 .500L15.5 7L8 7Z" fill="#e0e0e0"/><path d="M8 12.5L10 16" stroke="#404040" stroke-width=".8"/></svg>
<div class="t" style="left:59px;top:115px;letter-spacing:-0.173px">NVIDIA Network Bus Enumerator</div>
<div class="a" style="left:33px;top:138px;width:7px;height:1px;background-image:repeating-linear-gradient(90deg,#808080 0 1px,transparent 1px 2px)"></div>
<div class="a" style="left:24px;top:134px;width:9px;height:9px;background:#fff;border:1px solid #808080"><div class="a" style="left:1px;top:3px;width:5px;height:1px;background:#000"></div><div class="a" style="left:3px;top:1px;width:1px;height:5px;background:#000"></div></div>
<svg class="a" style="left:39px;top:131px" width="16" height="16" viewBox="0 0 16 16"><path d="M9 .800L1 7.5L9 14.5L11 12.8L5 7.5L11 2.5Z" fill="#fff" stroke="#000" stroke-width="1.1"/><rect x="7" y="5.8" width="8.5" height="3.4" fill="#c0c0c0" stroke="#000" stroke-width="1"/></svg>
<div class="t" style="left:59px;top:131px;letter-spacing:-0.105px">SCSI и RAID контроллеры</div>
<div class="a" style="left:33px;top:154px;width:7px;height:1px;background-image:repeating-linear-gradient(90deg,#808080 0 1px,transparent 1px 2px)"></div>
<div class="a" style="left:24px;top:150px;width:9px;height:9px;background:#fff;border:1px solid #808080"><div class="a" style="left:1px;top:3px;width:5px;height:1px;background:#000"></div><div class="a" style="left:3px;top:1px;width:1px;height:5px;background:#000"></div></div>
<svg class="a" style="left:39px;top:147px" width="16" height="16" viewBox="0 0 16 16"><path d="M3 1.5L13 .500L13.5 9.5L4 10.5Z" fill="#3890e8" stroke="#1858a8" stroke-width=".8"/><path d="M4.5 3L12 2L12.3 8L5.2 9Z" fill="#88d0f8"/><path d="M6 10.5L11 10L11.5 13L6 13.5Z" fill="#a8b0c8"/><ellipse cx="8.5" cy="14" rx="5" ry="1.7" fill="#c0c8dc" stroke="#8088a0" stroke-width=".5"/></svg>
<div class="t" style="left:59px;top:147px;letter-spacing:0.091px">Видеоадаптеры</div>
<div class="a" style="left:33px;top:170px;width:7px;height:1px;background-image:repeating-linear-gradient(90deg,#808080 0 1px,transparent 1px 2px)"></div>
<div class="a" style="left:24px;top:166px;width:9px;height:9px;background:#fff;border:1px solid #808080"><div class="a" style="left:1px;top:3px;width:5px;height:1px;background:#000"></div><div class="a" style="left:3px;top:1px;width:1px;height:5px;background:#000"></div></div>
<svg class="a" style="left:39px;top:163px" width="16" height="16" viewBox="0 0 16 16"><path d="M1 8L8 4.5L15 7.5L15 10L8 14L1 10.5Z" fill="#a0a0a0" stroke="#585858" stroke-width=".7"/><path d="M1 8L8 4.5L15 7.5L8 11Z" fill="#d8d8d8" stroke="#686868" stroke-width=".6"/><ellipse cx="8" cy="7.8" rx="3.6" ry="1.5" fill="#f0f0f0" stroke="#909090" stroke-width=".5"/><circle cx="12.5" cy="11" r=".8" fill="#40c040"/></svg>
<div class="t" style="left:59px;top:163px;letter-spacing:0.145px">Дисковые устройства</div>
<div class="a" style="left:33px;top:186px;width:7px;height:1px;background-image:repeating-linear-gradient(90deg,#808080 0 1px,transparent 1px 2px)"></div>
<div class="a" style="left:24px;top:182px;width:9px;height:9px;background:#fff;border:1px solid #808080"><div class="a" style="left:1px;top:3px;width:5px;height:1px;background:#000"></div><div class="a" style="left:3px;top:1px;width:1px;height:5px;background:#000"></div></div>
<svg class="a" style="left:39px;top:179px" width="16" height="16" viewBox="0 0 16 16"><circle cx="6.5" cy="6.5" r="5.8" fill="#909090" stroke="#404040" stroke-width=".8"/><circle cx="6" cy="6" r="3.5" fill="#505050"/><circle cx="5" cy="5" r="1.5" fill="#c0c0c0"/><path d="M10 10Q13 9.5 13.5 6.5M10.5 13Q15 12 15.5 7.5M8 14.5Q11 16 14 14" stroke="#7080e0" stroke-width="1" fill="none"/></svg>
<div class="t" style="left:59px;top:179px;letter-spacing:0.148px">Звуковые, видео и игровые устройства</div>
<div class="a" style="left:33px;top:202px;width:7px;height:1px;background-image:repeating-linear-gradient(90deg,#808080 0 1px,transparent 1px 2px)"></div>
<div class="a" style="left:24px;top:198px;width:9px;height:9px;background:#fff;border:1px solid #808080"><div class="a" style="left:1px;top:3px;width:5px;height:1px;background:#000"></div></div>
<svg class="a" style="left:39px;top:195px" width="16" height="16" viewBox="0 0 16 16"><path d="M.500 8Q2.5 4.2 8 4.5Q14 5 15.5 8.8Q13 12.8 8 12.3Q3 11.8 .500 8Z" fill="#c0c4e6" stroke="#8890c0" stroke-width=".8"/><path d="M3 7.5Q8 5.5 13 8M3.5 9Q8 7.5 12.5 9.8M5 10.5Q8 9.8 11 11" stroke="#fff" stroke-width="1" stroke-dasharray="1.2 .8" fill="none"/><path d="M7 4.5Q5 1.5 2 2.5" stroke="#9098c8" fill="none" stroke-width="1"/></svg>
<div class="t" style="left:59px;top:195px;letter-spacing:0.163px">Клавиатуры</div>
<div class="a" style="left:48px;top:218px;width:10px;height:1px;background-image:repeating-linear-gradient(90deg,#808080 0 1px,transparent 1px 2px)"></div>
<svg class="a" style="left:58px;top:211px" width="16" height="16" viewBox="0 0 16 16"><path d="M.500 8Q2.5 4.2 8 4.5Q14 5 15.5 8.8Q13 12.8 8 12.3Q3 11.8 .500 8Z" fill="#c0c4e6" stroke="#8890c0" stroke-width=".8"/><path d="M3 7.5Q8 5.5 13 8M3.5 9Q8 7.5 12.5 9.8M5 10.5Q8 9.8 11 11" stroke="#fff" stroke-width="1" stroke-dasharray="1.2 .8" fill="none"/><path d="M7 4.5Q5 1.5 2 2.5" stroke="#9098c8" fill="none" stroke-width="1"/><path d="M6 6L13 12M13 6L6 12" stroke="#e01818" stroke-width="2.3"/></svg>
<div class="t" style="left:78px;top:211px;letter-spacing:0.015px">Неизвестное устройство</div>
<div class="a" style="left:48px;top:234px;width:10px;height:1px;background-image:repeating-linear-gradient(90deg,#808080 0 1px,transparent 1px 2px)"></div>
<svg class="a" style="left:58px;top:227px" width="16" height="16" viewBox="0 0 16 16"><path d="M.500 8Q2.5 4.2 8 4.5Q14 5 15.5 8.8Q13 12.8 8 12.3Q3 11.8 .500 8Z" fill="#c0c4e6" stroke="#8890c0" stroke-width=".8"/><path d="M3 7.5Q8 5.5 13 8M3.5 9Q8 7.5 12.5 9.8M5 10.5Q8 9.8 11 11" stroke="#fff" stroke-width="1" stroke-dasharray="1.2 .8" fill="none"/><path d="M7 4.5Q5 1.5 2 2.5" stroke="#9098c8" fill="none" stroke-width="1"/></svg>
<div class="t" style="left:78px;top:227px;letter-spacing:0.003px">Стандартная (101/102 клавиши) или клавиатура PS/2 Microsoft Natural</div>
<div class="a" style="left:33px;top:250px;width:7px;height:1px;background-image:repeating-linear-gradient(90deg,#808080 0 1px,transparent 1px 2px)"></div>
<div class="a" style="left:24px;top:246px;width:9px;height:9px;background:#fff;border:1px solid #808080"><div class="a" style="left:1px;top:3px;width:5px;height:1px;background:#000"></div><div class="a" style="left:3px;top:1px;width:1px;height:5px;background:#000"></div></div>
<svg class="a" style="left:39px;top:243px" width="16" height="16" viewBox="0 0 16 16"><path d="M3 1.5L13 .500L13.5 9.5L4 10.5Z" fill="#3890e8" stroke="#1858a8" stroke-width=".8"/><path d="M4.5 3L12 2L12.3 8L5.2 9Z" fill="#88d0f8"/><path d="M6 10.5L11 10L11.5 13L6 13.5Z" fill="#a8b0c8"/><ellipse cx="8.5" cy="14" rx="5" ry="1.7" fill="#c0c8dc" stroke="#8088a0" stroke-width=".5"/></svg>
<div class="t" style="left:59px;top:243px;letter-spacing:0.118px">Компьютер</div>
<div class="a" style="left:33px;top:266px;width:7px;height:1px;background-image:repeating-linear-gradient(90deg,#808080 0 1px,transparent 1px 2px)"></div>
<div class="a" style="left:24px;top:262px;width:9px;height:9px;background:#fff;border:1px solid #808080"><div class="a" style="left:1px;top:3px;width:5px;height:1px;background:#000"></div><div class="a" style="left:3px;top:1px;width:1px;height:5px;background:#000"></div></div>
<svg class="a" style="left:39px;top:259px" width="16" height="16" viewBox="0 0 16 16"><path d="M.500 8H13" stroke="#000" stroke-width="1.5"/><path d="M12 5.5L15.5 8L12 10.5Z" fill="#000"/><path d="M3 8L6 3.5H9" stroke="#000" stroke-width="1.2" fill="none"/><circle cx="9.5" cy="3.5" r="1.5" fill="#000"/><path d="M5 8L8 12.5H10.5" stroke="#000" stroke-width="1.2" fill="none"/><rect x="10" y="11" width="3" height="3" fill="#fff" stroke="#000" stroke-width="1"/><circle cx="1.8" cy="8" r="1.8" fill="#000"/></svg>
<div class="t" style="left:59px;top:259px;letter-spacing:-0.075px">Контроллеры универсальной последовательной шины USB</div>
<div class="a" style="left:33px;top:282px;width:7px;height:1px;background-image:repeating-linear-gradient(90deg,#808080 0 1px,transparent 1px 2px)"></div>
<div class="a" style="left:24px;top:278px;width:9px;height:9px;background:#fff;border:1px solid #808080"><div class="a" style="left:1px;top:3px;width:5px;height:1px;background:#000"></div><div class="a" style="left:3px;top:1px;width:1px;height:5px;background:#000"></div></div>
<svg class="a" style="left:39px;top:275px" width="16" height="16" viewBox="0 0 16 16"><path d="M3 1.5L13 .500L13.5 9.5L4 10.5Z" fill="#3890e8" stroke="#1858a8" stroke-width=".8"/><path d="M4.5 3L12 2L12.3 8L5.2 9Z" fill="#88d0f8"/><path d="M6 10.5L11 10L11.5 13L6 13.5Z" fill="#a8b0c8"/><ellipse cx="8.5" cy="14" rx="5" ry="1.7" fill="#c0c8dc" stroke="#8088a0" stroke-width=".5"/></svg>
<div class="t" style="left:59px;top:275px;letter-spacing:0.039px">Мониторы</div>
<div class="a" style="left:33px;top:298px;width:7px;height:1px;background-image:repeating-linear-gradient(90deg,#808080 0 1px,transparent 1px 2px)"></div>
<div class="a" style="left:24px;top:294px;width:9px;height:9px;background:#fff;border:1px solid #808080"><div class="a" style="left:1px;top:3px;width:5px;height:1px;background:#000"></div></div>
<svg class="a" style="left:39px;top:291px" width="16" height="16" viewBox="0 0 16 16"><path d="M4 4Q3 1 7 2Q11 2.5 13 8Q15 13 10 14.5Q5 15.5 4 11Z" fill="#f0f0f0" stroke="#686868" stroke-width="1"/><path d="M5 12Q7 14.5 10.5 13.5Q13.5 12 12.5 9" stroke="#b0b0b0" stroke-width="1.6" fill="none"/><path d="M4.5 6Q8 7 10 3.5" stroke="#888" fill="none" stroke-width=".8"/><path d="M5 2Q3 0 1 1.5" stroke="#888" fill="none" stroke-width=".9"/></svg>
<div class="t" style="left:59px;top:291px;letter-spacing:0.023px">Мыши и иные указывающие устройства</div>
<div class="a" style="left:48px;top:314px;width:10px;height:1px;background-image:repeating-linear-gradient(90deg,#808080 0 1px,transparent 1px 2px)"></div>
<svg class="a" style="left:58px;top:307px" width="16" height="16" viewBox="0 0 16 16"><path d="M4 4Q3 1 7 2Q11 2.5 13 8Q15 13 10 14.5Q5 15.5 4 11Z" fill="#f0f0f0" stroke="#686868" stroke-width="1"/><path d="M5 12Q7 14.5 10.5 13.5Q13.5 12 12.5 9" stroke="#b0b0b0" stroke-width="1.6" fill="none"/><path d="M4.5 6Q8 7 10 3.5" stroke="#888" fill="none" stroke-width=".8"/><path d="M5 2Q3 0 1 1.5" stroke="#888" fill="none" stroke-width=".9"/></svg>
<div class="t" style="left:78px;top:307px;letter-spacing:-0.312px">PS/2-совместимая мышь</div>
<div class="a" style="left:48px;top:330px;width:10px;height:1px;background-image:repeating-linear-gradient(90deg,#808080 0 1px,transparent 1px 2px)"></div>
<svg class="a" style="left:58px;top:323px" width="16" height="16" viewBox="0 0 16 16"><path d="M4 4Q3 1 7 2Q11 2.5 13 8Q15 13 10 14.5Q5 15.5 4 11Z" fill="#f0f0f0" stroke="#686868" stroke-width="1"/><path d="M5 12Q7 14.5 10.5 13.5Q13.5 12 12.5 9" stroke="#b0b0b0" stroke-width="1.6" fill="none"/><path d="M4.5 6Q8 7 10 3.5" stroke="#888" fill="none" stroke-width=".8"/><path d="M5 2Q3 0 1 1.5" stroke="#888" fill="none" stroke-width=".9"/><circle cx="11" cy="9.5" r="5.2" fill="#f8f000"/><rect x="10.2" y="6" width="1.8" height="4.5" fill="#000"/><rect x="10.2" y="11.5" width="1.8" height="1.8" fill="#000"/></svg>
<div class="t" style="left:78px;top:323px;letter-spacing:0.015px">Неизвестное устройство</div>
<div class="a" style="left:33px;top:346px;width:7px;height:1px;background-image:repeating-linear-gradient(90deg,#808080 0 1px,transparent 1px 2px)"></div>
<div class="a" style="left:24px;top:342px;width:9px;height:9px;background:#fff;border:1px solid #808080"><div class="a" style="left:1px;top:3px;width:5px;height:1px;background:#000"></div><div class="a" style="left:3px;top:1px;width:1px;height:5px;background:#000"></div></div>
<svg class="a" style="left:39px;top:339px" width="16" height="16" viewBox="0 0 16 16"><path d="M2 2H14L12 8H4Z" fill="#e0e0e0" stroke="#303030" stroke-width="1"/><path d="M4.5 4H11.5M5.5 6H10.5" stroke="#505050" stroke-width=".9" stroke-dasharray="1 1"/><path d="M8 8V14" stroke="#303030" stroke-width="1.6"/><path d="M6 14Q8 16 10 14" stroke="#606060" fill="none"/></svg>
<div class="t" style="left:59px;top:339px;letter-spacing:-0.255px">Порты (COM и LPT)</div>
<div class="a" style="left:613px;top:0;width:16px;height:356px;background-image:repeating-conic-gradient(#d4d0c8 0 25%,#fff 0 50%);background-size:2px 2px"></div>
<div class="btn" style="left:613px;top:2px;width:16px;height:16px"><svg class="a" style="left:3px;top:5px" width="7" height="4"><path d="M3.5 0L7 4H0Z" fill="#000"/></svg></div>
<div class="btn" style="left:613px;top:67px;width:16px;height:200px"></div>
<div class="btn" style="left:613px;top:335px;width:16px;height:16px"><svg class="a" style="left:3px;top:5px" width="7" height="4"><path d="M0 0H7L3.5 4Z" fill="#000"/></svg></div>
</div>
<div class="a" style="left:3px;top:428px;width:631px;height:17px;border:1px solid;border-color:#808080 #fff #fff #808080"></div>
</div></div>
<!-- ===== ERROR DIALOG ===== -->
<div id="err" class="a win" style="left:393px;top:437px;width:500px;height:100px">
<div class="a tblue" style="left:3px;top:3px;width:492px;height:18px"></div>
<div class="t b" style="left:5px;top:5px;color:#fff;letter-spacing:.38px">Ошибка программы установки устройства</div>
<div class="cap" style="left:479px;top:6px"><svg class="a" style="left:3px;top:2px" width="8" height="7"><path d="M0 0L7 7M1 0L8 7M7 0L0 7M8 0L1 7" stroke="#000" stroke-width="1" shape-rendering="crispEdges"/></svg></div>
<div class="t" style="left:18px;top:33px;letter-spacing:.06px">Windows не удается загрузить программу для установки Mouse. Обратитесь к поставщику.</div>
<div class="btn" style="left:213px;top:64px;width:73px;height:21px;line-height:18px;box-shadow:inset -1px -1px 0 #808080,0 0 0 1px #000">OK</div>
</div>
<!-- ================= TASKBAR ================= -->
<div id="tb" class="a" style="left:0;top:930px;width:1280px;height:30px;background:#d4d0c8;border-top:1px solid #fff"></div>
<div class="a" style="left:0;top:931px;width:1280px;height:29px">
<div class="a" style="left:2px;top:3px;width:51px;height:22px;background:#d4d0c8;border:1px solid;border-color:#fff #404040 #404040 #fff;box-shadow:inset -1px -1px 0 #808080"></div>
<svg class="a" style="left:4px;top:5px" width="17" height="16"><path d="M3 2.5Q5.5 .5 8.5 2.5L7.5 7.5Q4.5 5.5 1.5 7.8Z" fill="#e85820"/><path d="M9.5 3Q12.5 4.5 15.5 2.5L14.5 7.5Q11.5 9.5 8.5 8Z" fill="#68b830"/><path d="M1.3 8.8Q4.3 6.8 7.3 8.8L6.3 14Q3.3 12 .3 14Z" fill="#3878d8"/><path d="M8.3 9.3Q11.3 10.8 14.3 8.8L13.3 14Q10.3 16 7.3 14.5Z" fill="#f0c020"/></svg>
<div class="t b" style="left:21px;top:7px;letter-spacing:0.906px">Пуск</div>
<div class="a" style="left:58px;top:3px;width:160px;height:22px;background:#d4d0c8;border:1px solid;border-color:#fff #404040 #404040 #fff;box-shadow:inset -1px -1px 0 #808080"><svg class="a" style="left:3px;top:2px" width="16" height="16" viewBox="0 0 16 16"><circle cx="8" cy="8" r="7.3" fill="#e87018"/><circle cx="9.3" cy="6.3" r="4.3" fill="#3a78c8"/><circle cx="10.2" cy="5.3" r="2.2" fill="#78b8e8"/><path d="M.800 7Q2 1.5 7.5 1Q4.5 3 5.2 6.5Q6 9.5 9.5 9.8Q12.5 9.5 13 7.5L15.2 7Q15.8 12.5 10 15Q3 16 .800 10Z" fill="#e8680e"/><path d="M1.5 5.5Q3.5 2 6.8 1.8Q4 4 4.3 7Z" fill="#f8b828"/><path d="M3 12Q7 15 12.5 12.5Q9 16 4.5 14Z" fill="#c84808"/></svg><div class="t" style="left:22px;top:3px">Регистрация - Компьют...</div></div>
<div class="a" style="left:222px;top:3px;width:159px;height:22px;background:#d4d0c8;border:1px solid;border-color:#fff #404040 #404040 #fff;box-shadow:inset -1px -1px 0 #808080"><svg class="a" style="left:3px;top:2px" width="16" height="16" viewBox="0 0 16 16"><rect x="2.5" y="1.5" width="9" height="12" rx="1" fill="#e8f0fc" stroke="#3858a0"/><rect x="4" y="3.5" width="6" height="4" fill="#5890e0"/><path d="M4 9.5H10M4 11.5H8" stroke="#7088b8"/><path d="M8 10L14.5 4L15.5 5.5L9.5 12L7 12.5Z" fill="#e0a020" stroke="#805000" stroke-width=".6"/><circle cx="13" cy="3" r="1.8" fill="#e03020"/></svg><div class="t" style="left:22px;top:3px">Панель управления</div></div>
<div class="a" style="left:385px;top:3px;width:159px;height:22px;background:#d4d0c8;border:1px solid;border-color:#fff #404040 #404040 #fff;box-shadow:inset -1px -1px 0 #808080"><svg class="a" style="left:3px;top:2px" width="16" height="16" viewBox="0 0 16 16"><rect x="3.5" y="1.5" width="10" height="8" fill="#d0d0d0" stroke="#000" stroke-width="1"/><rect x="5" y="3" width="7" height="5" fill="#0000c0"/><path d="M1 13L3.5 10.5H13.5L15.5 13V14.5H1Z" fill="#e8e8e8" stroke="#000" stroke-width=".9"/><path d="M3 12.5H13" stroke="#000" stroke-width=".8" stroke-dasharray="1 1"/></svg><div class="t" style="left:22px;top:3px">Диспетчер устройств</div></div>
<div class="a" style="left:547px;top:3px;width:160px;height:22px;border:1px solid;border-color:#404040 #fff #fff #404040;box-shadow:inset 1px 1px 0 #808080;background-image:repeating-conic-gradient(#d4d0c8 0 25%,#fff 0 50%);background-size:2px 2px"><svg class="a" style="left:4px;top:3px" width="16" height="16" viewBox="0 0 16 16"><path d="M2 5L7 1.5L9 3L5.5 6.5Z" fill="#c0c0c0" stroke="#303030" stroke-width=".8"/><path d="M6 5.5L10 9.5" stroke="#604020" stroke-width="1.8"/><rect x="3" y="8" width="4" height="6" fill="#f0e020" stroke="#706000" stroke-width=".7"/><rect x="7.5" y="6.5" width="7" height="8" fill="#fff" stroke="#000" stroke-width="1"/><path d="M9.5 9V13M12 9V13" stroke="#c02020" stroke-width="1.3"/><rect x="7.5" y="6.5" width="7" height="2" fill="#000"/></svg><div class="t b" style="left:23px;top:4px;letter-spacing:0.282px">Ошибка программы ...</div></div>
<div class="a" style="left:1095px;top:7px;width:13px;height:16px;background:#0a246a"></div>
<div class="t" style="left:1096px;top:8px;color:#fff;font-size:11px;letter-spacing:-.3px;overflow:hidden;width:12px">EN</div>
<div class="a" style="left:1111px;top:3px;width:166px;height:23px;border:1px solid;border-color:#808080 #fff #fff #808080"></div>
<div class="t b" style="left:1116px;top:7px;font-size:12px;letter-spacing:-1.5px">&#171;</div>
<svg class="a" style="left:1129px;top:7px" width="17" height="17"><circle cx="8.5" cy="8.5" r="8" fill="#109820" stroke="#085810" stroke-width=".8"/><path d="M1.5 8.5Q8.5 2.5 15.5 8.5Q8.5 14.5 1.5 8.5Z" fill="#fff" stroke="#003800" stroke-width="1"/><circle cx="8.5" cy="8.5" r="2.8" fill="#003800"/></svg>
<svg class="a" style="left:1147px;top:6px" width="16" height="19"><path d="M4 3L5 1M5 4H11V11H5Z M2 10H14V17H2Z M6 17V14H10V17" fill="#58e048" stroke="#108810" stroke-width="1.1"/><rect x="6.5" y="5.5" width="3" height="3.5" fill="#fff" stroke="#108810" stroke-width=".8"/><path d="M4 12V15M7 12V13.5M9 12V13.5M12 12V15" stroke="#108810"/></svg>
<svg class="a" style="left:1166px;top:8px" width="15" height="16"><rect x="2.5" y="3.5" width="8" height="9" rx="1.5" fill="#58c8f0" stroke="#a8e0f8" stroke-width="1.5"/><rect x="4.5" y="6" width="4" height="4" fill="#e8f8ff" stroke="#2898c8" stroke-width=".8"/><path d="M11 5L14 8L11 11" fill="#a8d8f0"/></svg>
<div class="a" style="left:1183px;top:7px;width:16px;height:16px;background:#e01018"></div>
<svg class="a" style="left:1183px;top:7px" width="16" height="16"><path d="M2 11Q2 3 9 3Q14 3.5 14.5 9" stroke="#fff" stroke-width="1.7" fill="none"/><path d="M3 12.5Q7 11 11 5.5M9 8Q10 12 12 13Q13.5 13 14 11" stroke="#fff" stroke-width="1.3" fill="none"/></svg>
<svg class="a" style="left:1201px;top:9px" width="17" height="13"><rect x="5" y="1" width="12" height="11" fill="#a8d058"/><path d="M1 6Q5 1 10 2.5Q13 3.5 14 6.5Q11 10 7 10Q3 9.5 1 6Z" fill="none" stroke="#88b830" stroke-width="1.3"/><path d="M4 6Q6 4 8.5 4.5Q10.5 5.5 10 7Q8 8 6.5 7" fill="none" stroke="#78a828" stroke-width="1.1"/></svg>
<svg class="a" style="left:1219px;top:7px" width="17" height="17"><circle cx="8.5" cy="8.5" r="7.5" fill="#b0b4b8" stroke="#808488" stroke-width="1.4"/><circle cx="8.5" cy="8.5" r="5" fill="#d0d4d8"/><path d="M9 5Q12 7 10 10Q8 12 9.5 13" stroke="#707478" stroke-width="1.5" fill="none"/></svg>
<div class="t" style="left:1241px;top:8px">20:29</div>
</div>

</div></body></html>
